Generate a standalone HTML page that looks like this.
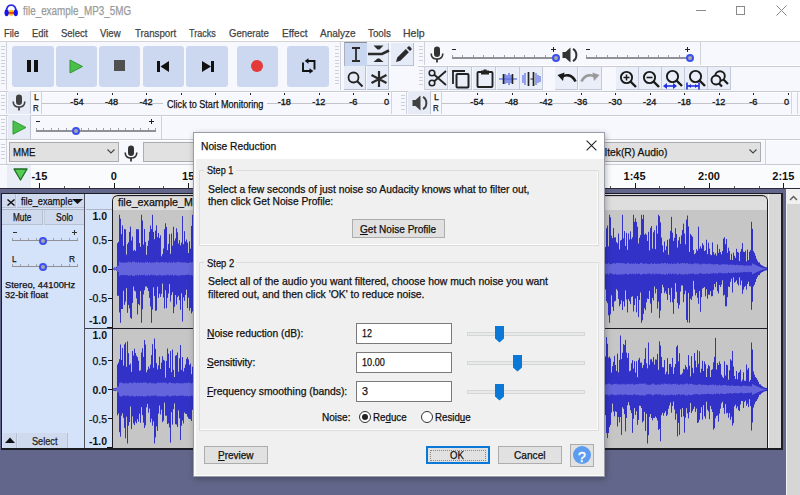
<!DOCTYPE html>
<html><head><meta charset="utf-8"><title>Audacity - Noise Reduction</title>
<style>
html,body{margin:0;padding:0;width:800px;height:495px;overflow:hidden;background:#fff}
body{position:relative;font-family:"Liberation Sans",sans-serif}
div{position:absolute}
.t{position:absolute;white-space:pre;display:block}
svg{overflow:visible}
u{text-decoration-thickness:1px;text-underline-offset:0.5px}
</style></head><body>
<div style="left:0px;top:0px;width:800px;height:41px;background:#fff"></div>
<svg style="position:absolute;left:4px;top:3.5px" width="15" height="13" viewBox="0 0 15 13">
<path d="M2.4 8 C2.4 3 4.5 1.2 7.2 1.2 C9.9 1.2 12 3 12 8" fill="none" stroke="#2a2ae6" stroke-width="1.7"/>
<ellipse cx="7.2" cy="8.8" rx="3.4" ry="3" fill="#f9c320"/>
<rect x="3.8" y="8" width="6.8" height="1.8" fill="#ee3a12"/>
<ellipse cx="2.6" cy="8.8" rx="2.1" ry="3.4" fill="#1414f0"/>
<ellipse cx="11.8" cy="8.8" rx="2.1" ry="3.4" fill="#1414f0"/>
</svg>
<span class="t" style="left:22.80px;top:4.84px;font-size:12px;line-height:12px;color:#9a9a9a;font-weight:normal;transform:scaleX(0.8234);transform-origin:left top;font-family:'Liberation Sans',sans-serif;-webkit-text-stroke:0.25px #9a9a9a">file_example_MP3_5MG</span>
<div style="left:696px;top:10px;width:10px;height:1px;background:#8a8a8a"></div>
<div style="left:736px;top:6px;width:9px;height:9px;border:1px solid #8a8a8a;box-sizing:border-box"></div>
<svg style="position:absolute;left:776px;top:5px" width="11" height="11" viewBox="0 0 11 11"><path d="M0.5 0.5 L10.5 10.5 M10.5 0.5 L0.5 10.5" stroke="#8a8a8a" stroke-width="1"/></svg>
<span class="t" style="left:3.90px;top:27.99px;font-size:11px;line-height:11px;color:#444;font-weight:normal;transform:scaleX(0.8515);transform-origin:left top;font-family:'Liberation Sans',sans-serif;-webkit-text-stroke:0.25px #444">File</span>
<span class="t" style="left:31.80px;top:27.99px;font-size:11px;line-height:11px;color:#444;font-weight:normal;transform:scaleX(0.8540);transform-origin:left top;font-family:'Liberation Sans',sans-serif;-webkit-text-stroke:0.25px #444">Edit</span>
<span class="t" style="left:61.00px;top:27.99px;font-size:11px;line-height:11px;color:#444;font-weight:normal;transform:scaleX(0.8634);transform-origin:left top;font-family:'Liberation Sans',sans-serif;-webkit-text-stroke:0.25px #444">Select</span>
<span class="t" style="left:100.30px;top:27.99px;font-size:11px;line-height:11px;color:#444;font-weight:normal;transform:scaleX(0.8708);transform-origin:left top;font-family:'Liberation Sans',sans-serif;-webkit-text-stroke:0.25px #444">View</span>
<span class="t" style="left:134.60px;top:27.99px;font-size:11px;line-height:11px;color:#444;font-weight:normal;transform:scaleX(0.8828);transform-origin:left top;font-family:'Liberation Sans',sans-serif;-webkit-text-stroke:0.25px #444">Transport</span>
<span class="t" style="left:189.00px;top:27.99px;font-size:11px;line-height:11px;color:#444;font-weight:normal;transform:scaleX(0.8192);transform-origin:left top;font-family:'Liberation Sans',sans-serif;-webkit-text-stroke:0.25px #444">Tracks</span>
<span class="t" style="left:229.20px;top:27.99px;font-size:11px;line-height:11px;color:#444;font-weight:normal;transform:scaleX(0.8676);transform-origin:left top;font-family:'Liberation Sans',sans-serif;-webkit-text-stroke:0.25px #444">Generate</span>
<span class="t" style="left:282.00px;top:27.99px;font-size:11px;line-height:11px;color:#444;font-weight:normal;transform:scaleX(0.9128);transform-origin:left top;font-family:'Liberation Sans',sans-serif;-webkit-text-stroke:0.25px #444">Effect</span>
<span class="t" style="left:319.90px;top:27.99px;font-size:11px;line-height:11px;color:#444;font-weight:normal;transform:scaleX(0.9121);transform-origin:left top;font-family:'Liberation Sans',sans-serif;-webkit-text-stroke:0.25px #444">Analyze</span>
<span class="t" style="left:368.00px;top:27.99px;font-size:11px;line-height:11px;color:#444;font-weight:normal;transform:scaleX(0.8876);transform-origin:left top;font-family:'Liberation Sans',sans-serif;-webkit-text-stroke:0.25px #444">Tools</span>
<span class="t" style="left:403.10px;top:27.99px;font-size:11px;line-height:11px;color:#444;font-weight:normal;transform:scaleX(0.9591);transform-origin:left top;font-family:'Liberation Sans',sans-serif;-webkit-text-stroke:0.25px #444">Help</span>
<div style="left:0px;top:41px;width:800px;height:148px;background:#f7f8fd"></div>
<div style="left:0px;top:41px;width:800px;height:1px;background:#d4d4d4"></div>
<div style="left:0px;top:91px;width:800px;height:1px;background:#c9cbd2"></div>
<div style="left:0px;top:92px;width:800px;height:1px;background:#ffffff"></div>
<div style="left:0px;top:115px;width:800px;height:1px;background:#c9cbd2"></div>
<div style="left:0px;top:116px;width:800px;height:1px;background:#ffffff"></div>
<div style="left:0px;top:139px;width:800px;height:1px;background:#c9cbd2"></div>
<div style="left:0px;top:140px;width:800px;height:1px;background:#ffffff"></div>
<div style="left:0px;top:164px;width:800px;height:1px;background:#c9cbd2"></div>
<div style="left:0px;top:165px;width:800px;height:1px;background:#ffffff"></div>
<div style="left:1px;top:46.0px;width:4px;height:1px;background:#cdd0d8"></div><div style="left:1px;top:49.4px;width:4px;height:1px;background:#cdd0d8"></div><div style="left:1px;top:52.8px;width:4px;height:1px;background:#cdd0d8"></div><div style="left:1px;top:56.2px;width:4px;height:1px;background:#cdd0d8"></div><div style="left:1px;top:59.6px;width:4px;height:1px;background:#cdd0d8"></div><div style="left:1px;top:63.0px;width:4px;height:1px;background:#cdd0d8"></div><div style="left:1px;top:66.4px;width:4px;height:1px;background:#cdd0d8"></div><div style="left:1px;top:69.8px;width:4px;height:1px;background:#cdd0d8"></div><div style="left:1px;top:73.2px;width:4px;height:1px;background:#cdd0d8"></div><div style="left:1px;top:76.6px;width:4px;height:1px;background:#cdd0d8"></div><div style="left:1px;top:80.0px;width:4px;height:1px;background:#cdd0d8"></div><div style="left:1px;top:83.4px;width:4px;height:1px;background:#cdd0d8"></div>
<div style="left:6px;top:42px;width:1px;height:48px;background:#cfd2da"></div>
<div style="left:12px;top:45.5px;width:42px;height:41px;background:#ccd8f0;border-radius:3px"></div>
<div style="left:56px;top:45.5px;width:41px;height:41px;background:#ccd8f0;border-radius:3px"></div>
<div style="left:99px;top:45.5px;width:41px;height:41px;background:#ccd8f0;border-radius:3px"></div>
<div style="left:143px;top:45.5px;width:41px;height:41px;background:#ccd8f0;border-radius:3px"></div>
<div style="left:186px;top:45.5px;width:42px;height:41px;background:#ccd8f0;border-radius:3px"></div>
<div style="left:237px;top:45.5px;width:41px;height:41px;background:#ccd8f0;border-radius:3px"></div>
<div style="left:287px;top:45.5px;width:42px;height:41px;background:#ccd8f0;border-radius:3px"></div>
<div style="left:27px;top:60px;width:4px;height:12px;background:#111"></div>
<div style="left:34px;top:60px;width:4px;height:12px;background:#111"></div>
<svg style="position:absolute;left:69px;top:59px" width="15" height="15" viewBox="0 0 15 15"><path d="M1 1 L13.5 7.5 L1 14 Z" fill="#4bbf4b" stroke="#2e9a33" stroke-width="1"/></svg>
<div style="left:114px;top:60px;width:11px;height:11px;background:#505050"></div>
<div style="left:157px;top:61px;width:3px;height:11px;background:#111"></div>
<svg style="position:absolute;left:160px;top:61px" width="10" height="11" viewBox="0 0 10 11"><path d="M0.5 5.5 L9 0 L9 11 Z" fill="#111"/></svg>
<div style="left:211px;top:61px;width:3px;height:11px;background:#111"></div>
<svg style="position:absolute;left:201px;top:61px" width="10" height="11" viewBox="0 0 10 11"><path d="M10 5.5 L1 0 L1 11 Z" fill="#111"/></svg>
<div style="left:251px;top:60px;width:12px;height:12px;border-radius:50%;background:#e53a3a"></div>
<svg style="position:absolute;left:301px;top:58px" width="16" height="16" viewBox="0 0 16 16">
<path d="M2 4.5 V13 H9" fill="none" stroke="#111" stroke-width="1.9"/><path d="M8.5 10.2 L12.3 13 L8.5 15.8 Z" fill="#111"/>
<path d="M13.5 11.5 V3 H7" fill="none" stroke="#111" stroke-width="1.9"/><path d="M7.5 0.2 L3.7 3 L7.5 5.8 Z" fill="#111"/>
</svg>
<div style="left:335px;top:46.0px;width:4px;height:1px;background:#cdd0d8"></div><div style="left:335px;top:49.4px;width:4px;height:1px;background:#cdd0d8"></div><div style="left:335px;top:52.8px;width:4px;height:1px;background:#cdd0d8"></div><div style="left:335px;top:56.2px;width:4px;height:1px;background:#cdd0d8"></div><div style="left:335px;top:59.6px;width:4px;height:1px;background:#cdd0d8"></div><div style="left:335px;top:63.0px;width:4px;height:1px;background:#cdd0d8"></div><div style="left:335px;top:66.4px;width:4px;height:1px;background:#cdd0d8"></div><div style="left:335px;top:69.8px;width:4px;height:1px;background:#cdd0d8"></div><div style="left:335px;top:73.2px;width:4px;height:1px;background:#cdd0d8"></div><div style="left:335px;top:76.6px;width:4px;height:1px;background:#cdd0d8"></div><div style="left:335px;top:80.0px;width:4px;height:1px;background:#cdd0d8"></div><div style="left:335px;top:83.4px;width:4px;height:1px;background:#cdd0d8"></div>
<div style="left:340px;top:42px;width:1px;height:48px;background:#cfd2da"></div>
<div style="left:344px;top:42px;width:23px;height:24px;background:#c8d6f0;border-top:1.5px solid #8a8f9c;border-left:1px solid #a9b0c0;box-sizing:border-box"></div>
<div style="left:367px;top:43px;width:22px;height:23px;background:#e6ecf7;border-right:1px solid #b9c0cf;border-bottom:1px solid #b9c0cf;box-sizing:border-box"></div>
<div style="left:391px;top:43px;width:23px;height:23px;background:#e6ecf7;border-right:1px solid #b9c0cf;border-bottom:1px solid #b9c0cf;box-sizing:border-box"></div>
<div style="left:344px;top:66px;width:22px;height:24px;background:#e6ecf7;border-right:1px solid #b9c0cf;border-bottom:1px solid #b9c0cf;box-sizing:border-box"></div>
<div style="left:367px;top:66px;width:22px;height:24px;background:#e6ecf7;border-right:1px solid #b9c0cf;border-bottom:1px solid #b9c0cf;box-sizing:border-box"></div>
<svg style="position:absolute;left:350px;top:47px" width="12" height="15" viewBox="0 0 12 15"><path d="M2 1 H10 M6 1 V14 M2 14 H10" stroke="#2a2a2a" stroke-width="1.8" fill="none"/></svg>
<svg style="position:absolute;left:366px;top:44px" width="24" height="20" viewBox="0 0 24 20">
<path d="M7.5 1.5 H17.5 L13.5 5.5 H11.5 Z" fill="#2a2a2a"/><path d="M7.5 18 H17.5 L13.5 14.5 H11.5 Z" fill="#2a2a2a"/>
<path d="M2 10 H16 L23 6.5" stroke="#2a2a2a" stroke-width="2.6" fill="none"/></svg>
<svg style="position:absolute;left:394px;top:46px" width="18" height="18" viewBox="0 0 18 18">
<path d="M2 16 L3.3 11.6 L11.8 3.1 L14.9 6.2 L6.4 14.7 Z" fill="#2a2a2a"/><path d="M12.9 2 L14.3 0.6 Q15 -0.1 15.8 0.6 L17.4 2.2 Q18.1 3 17.4 3.7 L16 5.1 Z" fill="#2a2a2a"/></svg>
<svg style="position:absolute;left:347px;top:71px" width="17" height="17" viewBox="0 0 17 17">
<circle cx="6.5" cy="6.5" r="5" stroke="#222" stroke-width="1.8" fill="none"/><path d="M10 10 L15.5 15.5" stroke="#222" stroke-width="2"/></svg>
<svg style="position:absolute;left:370px;top:70px" width="18" height="18" viewBox="0 0 18 18">
<path d="M9 1 V17 M1.5 5 L16.5 13 M1.5 13 L16.5 5" stroke="#2a2a2a" stroke-width="2.2"/></svg>
<div style="left:419px;top:46.0px;width:4px;height:1px;background:#cdd0d8"></div><div style="left:419px;top:49.4px;width:4px;height:1px;background:#cdd0d8"></div><div style="left:419px;top:52.8px;width:4px;height:1px;background:#cdd0d8"></div><div style="left:419px;top:56.2px;width:4px;height:1px;background:#cdd0d8"></div><div style="left:419px;top:59.6px;width:4px;height:1px;background:#cdd0d8"></div>
<div style="left:424px;top:42px;width:1px;height:24px;background:#cfd2da"></div>
<svg style="position:absolute;left:430px;top:46px" width="14" height="17" viewBox="0 0 14 17">
<rect x="4" y="0.5" width="6" height="10.5" rx="3" fill="#333"/><path d="M1.2 7.5 C1.2 11 3.5 13 7 13 C10.5 13 12.8 11 12.8 7.5" stroke="#333" stroke-width="1.6" fill="none"/>
<path d="M7 13 V16.5" stroke="#333" stroke-width="1.8"/></svg>
<div style="left:452px;top:57px;width:104px;height:1.5px;background:#8f9098"></div><div style="left:452.0px;top:55px;width:1px;height:2px;background:#a0a0a8"></div><div style="left:462.3px;top:55px;width:1px;height:2px;background:#a0a0a8"></div><div style="left:472.6px;top:55px;width:1px;height:2px;background:#a0a0a8"></div><div style="left:482.9px;top:55px;width:1px;height:2px;background:#a0a0a8"></div><div style="left:493.2px;top:55px;width:1px;height:2px;background:#a0a0a8"></div><div style="left:503.5px;top:55px;width:1px;height:2px;background:#a0a0a8"></div><div style="left:513.8px;top:55px;width:1px;height:2px;background:#a0a0a8"></div><div style="left:524.1px;top:55px;width:1px;height:2px;background:#a0a0a8"></div><div style="left:534.4px;top:55px;width:1px;height:2px;background:#a0a0a8"></div><div style="left:544.7px;top:55px;width:1px;height:2px;background:#a0a0a8"></div><div style="left:555.0px;top:55px;width:1px;height:2px;background:#a0a0a8"></div><div style="left:551.5px;top:54.0px;width:8px;height:8px;border-radius:50%;background:#a8a8a8;border:2.2px solid #3b4ff2;box-sizing:border-box"></div>
<div style="left:452px;top:48.5px;width:4px;height:1.2px;background:#222"></div>
<div style="left:551px;top:48.5px;width:5px;height:1.2px;background:#222"></div>
<div style="left:552.9px;top:46.5px;width:1.2px;height:5px;background:#222"></div>
<svg style="position:absolute;left:562px;top:47px" width="16" height="16" viewBox="0 0 16 16">
<path d="M0.5 5 H3.5 L8.5 0.5 V15.5 L3.5 11 H0.5 Z" fill="#333"/><path d="M11 1.8 C15.5 4.5 15.5 11.5 11 14.2" stroke="#333" stroke-width="2" fill="none"/></svg>
<div style="left:586px;top:57px;width:104px;height:1.5px;background:#8f9098"></div><div style="left:586.0px;top:55px;width:1px;height:2px;background:#a0a0a8"></div><div style="left:596.3px;top:55px;width:1px;height:2px;background:#a0a0a8"></div><div style="left:606.6px;top:55px;width:1px;height:2px;background:#a0a0a8"></div><div style="left:616.9px;top:55px;width:1px;height:2px;background:#a0a0a8"></div><div style="left:627.2px;top:55px;width:1px;height:2px;background:#a0a0a8"></div><div style="left:637.5px;top:55px;width:1px;height:2px;background:#a0a0a8"></div><div style="left:647.8px;top:55px;width:1px;height:2px;background:#a0a0a8"></div><div style="left:658.1px;top:55px;width:1px;height:2px;background:#a0a0a8"></div><div style="left:668.4px;top:55px;width:1px;height:2px;background:#a0a0a8"></div><div style="left:678.7px;top:55px;width:1px;height:2px;background:#a0a0a8"></div><div style="left:689.0px;top:55px;width:1px;height:2px;background:#a0a0a8"></div><div style="left:686.0px;top:54.0px;width:8px;height:8px;border-radius:50%;background:#a8a8a8;border:2.2px solid #3b4ff2;box-sizing:border-box"></div>
<div style="left:586px;top:48.5px;width:4px;height:1.2px;background:#222"></div>
<div style="left:685px;top:48.5px;width:5px;height:1.2px;background:#222"></div>
<div style="left:686.9px;top:46.5px;width:1.2px;height:5px;background:#222"></div>
<div style="left:700px;top:42px;width:1px;height:24px;background:#cfd2da"></div>
<div style="left:418px;top:66px;width:382px;height:1px;background:#c9cbd2"></div>
<div style="left:418px;top:65px;width:382px;height:1px;background:#ffffff"></div>
<div style="left:419px;top:70.0px;width:4px;height:1px;background:#cdd0d8"></div><div style="left:419px;top:73.4px;width:4px;height:1px;background:#cdd0d8"></div><div style="left:419px;top:76.8px;width:4px;height:1px;background:#cdd0d8"></div><div style="left:419px;top:80.2px;width:4px;height:1px;background:#cdd0d8"></div><div style="left:419px;top:83.6px;width:4px;height:1px;background:#cdd0d8"></div>
<div style="left:424px;top:66px;width:1px;height:24px;background:#cfd2da"></div>
<div style="left:425px;top:67px;width:23px;height:23px;background:#e9eef8;border-right:1px solid #c3c9d6;border-bottom:1px solid #c3c9d6;box-sizing:border-box"></div>
<div style="left:449px;top:67px;width:23px;height:23px;background:#e9eef8;border-right:1px solid #c3c9d6;border-bottom:1px solid #c3c9d6;box-sizing:border-box"></div>
<div style="left:473px;top:67px;width:23px;height:23px;background:#e9eef8;border-right:1px solid #c3c9d6;border-bottom:1px solid #c3c9d6;box-sizing:border-box"></div>
<div style="left:497px;top:67px;width:23px;height:23px;background:#e9eef8;border-right:1px solid #c3c9d6;border-bottom:1px solid #c3c9d6;box-sizing:border-box"></div>
<div style="left:520px;top:67px;width:23px;height:23px;background:#e9eef8;border-right:1px solid #c3c9d6;border-bottom:1px solid #c3c9d6;box-sizing:border-box"></div>
<div style="left:555px;top:67px;width:23px;height:23px;background:#e9eef8;border-right:1px solid #c3c9d6;border-bottom:1px solid #c3c9d6;box-sizing:border-box"></div>
<div style="left:579px;top:67px;width:23px;height:23px;background:#e9eef8;border-right:1px solid #c3c9d6;border-bottom:1px solid #c3c9d6;box-sizing:border-box"></div>
<div style="left:616px;top:67px;width:23px;height:23px;background:#e9eef8;border-right:1px solid #c3c9d6;border-bottom:1px solid #c3c9d6;box-sizing:border-box"></div>
<div style="left:639px;top:67px;width:23px;height:23px;background:#e9eef8;border-right:1px solid #c3c9d6;border-bottom:1px solid #c3c9d6;box-sizing:border-box"></div>
<div style="left:662px;top:67px;width:23px;height:23px;background:#e9eef8;border-right:1px solid #c3c9d6;border-bottom:1px solid #c3c9d6;box-sizing:border-box"></div>
<div style="left:685px;top:67px;width:23px;height:23px;background:#e9eef8;border-right:1px solid #c3c9d6;border-bottom:1px solid #c3c9d6;box-sizing:border-box"></div>
<div style="left:708px;top:67px;width:23px;height:23px;background:#e9eef8;border-right:1px solid #c3c9d6;border-bottom:1px solid #c3c9d6;box-sizing:border-box"></div>
<svg style="position:absolute;left:428px;top:69px" width="19" height="18" viewBox="0 0 19 18">
<circle cx="4" cy="4" r="2.8" stroke="#222" stroke-width="1.6" fill="none"/><circle cx="4" cy="14" r="2.8" stroke="#222" stroke-width="1.6" fill="none"/>
<path d="M6 5.5 L18 16 M6 12.5 L18 2" stroke="#222" stroke-width="1.8"/></svg>
<svg style="position:absolute;left:451px;top:69px" width="20" height="20" viewBox="0 0 20 20">
<path d="M2 15 V2 H14" stroke="#222" stroke-width="1.8" fill="none"/><rect x="5.5" y="5" width="12" height="13.5" rx="1" stroke="#222" stroke-width="2" fill="none"/></svg>
<svg style="position:absolute;left:476px;top:69px" width="18" height="19" viewBox="0 0 18 19">
<rect x="1.5" y="3" width="15" height="15" rx="1" stroke="#222" stroke-width="1.9" fill="none"/><path d="M5 1.5 H13 V5.5 H5 Z" fill="#222"/><rect x="7.5" y="0.5" width="3" height="2" fill="#222"/></svg>
<svg style="position:absolute;left:498px;top:71px" width="20" height="16" viewBox="0 0 20 16">
<path d="M1 8 H19" stroke="#3a4ed8" stroke-width="1"/>
<path d="M7 3 V13 M9 4 V12 M11 2 V14 M13 4 V12" stroke="#5a6ee0" stroke-width="1.4"/>
<path d="M5.5 3 V13 M14.5 3 V13" stroke="#222" stroke-width="1.6"/></svg>
<svg style="position:absolute;left:521px;top:70px" width="21" height="18" viewBox="0 0 21 18">
<path d="M2 5 V13 M4 3 V15 M15 3 V15 M17 5 V13 M19 6 V12" stroke="#6f80e8" stroke-width="1.4"/>
<path d="M9.5 9 H12" stroke="#222" stroke-width="1"/>
<path d="M7.5 2 V16 M12.5 2 V16" stroke="#222" stroke-width="1.7"/></svg>
<svg style="position:absolute;left:557px;top:71px" width="20" height="14" viewBox="0 0 20 14">
<path d="M4 6.5 C8 3 15 3 18.5 10.5" stroke="#1a1a1a" stroke-width="2.6" fill="none"/><path d="M0.5 4 L7.5 1.5 L6 10 Z" fill="#1a1a1a"/></svg>
<svg style="position:absolute;left:580px;top:71px" width="20" height="14" viewBox="0 0 20 14">
<path d="M16 6.5 C12 3 5 3 1.5 10.5" stroke="#9a9a9a" stroke-width="2.6" fill="none"/><path d="M19.5 4 L12.5 1.5 L14 10 Z" fill="#9a9a9a"/></svg>
<svg style="position:absolute;left:619px;top:70px" width="19" height="19" viewBox="0 0 19 19">
<circle cx="7.5" cy="7.5" r="5.6" stroke="#1a1a1a" stroke-width="1.9" fill="none"/><path d="M11.5 11.5 L17 17" stroke="#1a1a1a" stroke-width="2.4"/><path d="M4.5 7.5 H10.5 M7.5 4.5 V10.5" stroke="#1a1a1a" stroke-width="1.5"/></svg>
<svg style="position:absolute;left:642px;top:70px" width="19" height="19" viewBox="0 0 19 19">
<circle cx="7.5" cy="7.5" r="5.6" stroke="#1a1a1a" stroke-width="1.9" fill="none"/><path d="M11.5 11.5 L17 17" stroke="#1a1a1a" stroke-width="2.4"/><path d="M4.5 7.5 H10.5" stroke="#1a1a1a" stroke-width="1.6"/></svg>
<svg style="position:absolute;left:665px;top:69px" width="19" height="19" viewBox="0 0 19 19">
<circle cx="7.5" cy="7.5" r="5.6" stroke="#1a1a1a" stroke-width="1.9" fill="none"/><path d="M11.5 11.5 L17 17" stroke="#1a1a1a" stroke-width="2.4"/></svg>
<svg style="position:absolute;left:663px;top:82px" width="14" height="8" viewBox="0 0 14 8"><path d="M2 4 H12" stroke="#2030e0" stroke-width="1.6"/><path d="M0 4 L4 1 V7 Z M14 4 L10 1 V7 Z" fill="#2030e0"/></svg>
<svg style="position:absolute;left:688px;top:69px" width="19" height="19" viewBox="0 0 19 19">
<circle cx="7.5" cy="7.5" r="5.6" stroke="#1a1a1a" stroke-width="1.9" fill="none"/><path d="M11.5 11.5 L17 17" stroke="#1a1a1a" stroke-width="2.4"/></svg>
<svg style="position:absolute;left:686px;top:82px" width="14" height="8" viewBox="0 0 14 8"><path d="M1 4 H13" stroke="#2030e0" stroke-width="1.6"/><path d="M1 0.5 V7.5 M13 0.5 V7.5" stroke="#2030e0" stroke-width="1.6"/><path d="M2 4 L5 2 V6 Z M12 4 L9 2 V6 Z" fill="#2030e0"/></svg>
<svg style="position:absolute;left:710px;top:69px" width="20" height="20" viewBox="0 0 20 20">
<circle cx="10" cy="7" r="4.8" stroke="#1a1a1a" stroke-width="1.9" fill="none"/><circle cx="6" cy="11" r="4.5" stroke="#1a1a1a" stroke-width="1.9" fill="#e9eef8"/>
<path d="M13.5 10.5 L18 15 M9 14.5 L12 17.5" stroke="#1a1a1a" stroke-width="2.2"/></svg>
<div style="left:1px;top:95.0px;width:4px;height:1px;background:#cdd0d8"></div><div style="left:1px;top:98.4px;width:4px;height:1px;background:#cdd0d8"></div><div style="left:1px;top:101.8px;width:4px;height:1px;background:#cdd0d8"></div><div style="left:1px;top:105.2px;width:4px;height:1px;background:#cdd0d8"></div><div style="left:1px;top:108.6px;width:4px;height:1px;background:#cdd0d8"></div>
<div style="left:6px;top:91px;width:1px;height:23px;background:#cfd2da"></div>
<div style="left:8px;top:91px;width:23px;height:23px;background:#e6ebf6;border-right:1px solid #c0c6d3;box-sizing:border-box"></div>
<svg style="position:absolute;left:12px;top:94px" width="14" height="17" viewBox="0 0 14 17">
<rect x="4" y="0.5" width="6" height="10.5" rx="3" fill="#404040"/><path d="M1.2 7.5 C1.2 11 3.5 13 7 13 C10.5 13 12.8 11 12.8 7.5" stroke="#404040" stroke-width="1.6" fill="none"/>
<path d="M7 13 V16.5" stroke="#404040" stroke-width="1.8"/></svg>
<span class="t" style="left:33.60px;top:92.17px;font-size:9.6px;line-height:9.6px;color:#111;font-weight:normal;transform:scaleX(0.9170);transform-origin:left top;font-family:'Liberation Sans',sans-serif;-webkit-text-stroke:0.25px #111">L</span>
<span class="t" style="left:33.30px;top:104.01px;font-size:9.2px;line-height:9.2px;color:#111;font-weight:normal;transform:scaleX(0.8584);transform-origin:left top;font-family:'Liberation Sans',sans-serif;-webkit-text-stroke:0.25px #111">R</span>
<div style="left:41px;top:91px;width:1px;height:23px;background:#cfd2da"></div>
<div style="left:42px;top:103px;width:348px;height:1px;background:#c2c4ca"></div>
<div style="left:390.5px;top:91px;width:1px;height:23px;background:#d4d6dc"></div>
<div style="left:77px;top:93px;width:1px;height:2px;background:#222"></div>
<span class="t" style="left:70.36px;top:98.01px;font-size:9.2px;line-height:9.2px;color:#111;font-weight:normal;transform:scaleX(1.0000);transform-origin:center top;font-family:'Liberation Sans',sans-serif;-webkit-text-stroke:0.3px #111">-54</span>
<div style="left:112px;top:93px;width:1px;height:2px;background:#222"></div>
<span class="t" style="left:104.91px;top:98.01px;font-size:9.2px;line-height:9.2px;color:#111;font-weight:normal;transform:scaleX(1.0000);transform-origin:center top;font-family:'Liberation Sans',sans-serif;-webkit-text-stroke:0.3px #111">-48</span>
<div style="left:146px;top:93px;width:1px;height:2px;background:#222"></div>
<span class="t" style="left:139.46px;top:98.01px;font-size:9.2px;line-height:9.2px;color:#111;font-weight:normal;transform:scaleX(1.0000);transform-origin:center top;font-family:'Liberation Sans',sans-serif;-webkit-text-stroke:0.3px #111">-42</span>
<div style="left:181px;top:93px;width:1px;height:2px;background:#222"></div>
<div style="left:215px;top:93px;width:1px;height:2px;background:#222"></div>
<div style="left:250px;top:93px;width:1px;height:2px;background:#222"></div>
<div style="left:284px;top:93px;width:1px;height:2px;background:#222"></div>
<span class="t" style="left:277.66px;top:98.01px;font-size:9.2px;line-height:9.2px;color:#111;font-weight:normal;transform:scaleX(1.0000);transform-origin:center top;font-family:'Liberation Sans',sans-serif;-webkit-text-stroke:0.3px #111">-18</span>
<div style="left:319px;top:93px;width:1px;height:2px;background:#222"></div>
<span class="t" style="left:312.21px;top:98.01px;font-size:9.2px;line-height:9.2px;color:#111;font-weight:normal;transform:scaleX(1.0000);transform-origin:center top;font-family:'Liberation Sans',sans-serif;-webkit-text-stroke:0.3px #111">-12</span>
<div style="left:353px;top:93px;width:1px;height:2px;background:#222"></div>
<span class="t" style="left:349.31px;top:98.01px;font-size:9.2px;line-height:9.2px;color:#111;font-weight:normal;transform:scaleX(1.0000);transform-origin:center top;font-family:'Liberation Sans',sans-serif;-webkit-text-stroke:0.3px #111">-6</span>
<div style="left:388px;top:93px;width:1px;height:2px;background:#222"></div>
<span class="t" style="left:383.89px;top:98.01px;font-size:9.2px;line-height:9.2px;color:#111;font-weight:normal;transform:scaleX(1.0000);transform-origin:center top;font-family:'Liberation Sans',sans-serif;-webkit-text-stroke:0.3px #111">0</span>
<div style="left:163px;top:97px;width:104px;height:13px;background:#f7f8fd"></div>
<span class="t" style="left:166.60px;top:99.53px;font-size:10px;line-height:10px;color:#111;font-weight:normal;transform:scaleX(0.9081);transform-origin:left top;font-family:'Liberation Sans',sans-serif;-webkit-text-stroke:0.25px #111">Click to Start Monitoring</span>
<div style="left:401px;top:95.0px;width:4px;height:1px;background:#cdd0d8"></div><div style="left:401px;top:98.4px;width:4px;height:1px;background:#cdd0d8"></div><div style="left:401px;top:101.8px;width:4px;height:1px;background:#cdd0d8"></div><div style="left:401px;top:105.2px;width:4px;height:1px;background:#cdd0d8"></div><div style="left:401px;top:108.6px;width:4px;height:1px;background:#cdd0d8"></div>
<div style="left:406px;top:91px;width:1px;height:23px;background:#cfd2da"></div>
<div style="left:408px;top:91px;width:23px;height:23px;background:#e6ebf6;border-right:1px solid #c0c6d3;box-sizing:border-box"></div>
<svg style="position:absolute;left:412px;top:95px" width="16" height="16" viewBox="0 0 16 16">
<path d="M0.5 5 H3.5 L8.5 0.5 V15.5 L3.5 11 H0.5 Z" fill="#404040"/><path d="M11 1.8 C15.5 4.5 15.5 11.5 11 14.2" stroke="#404040" stroke-width="2" fill="none"/></svg>
<span class="t" style="left:433.60px;top:92.17px;font-size:9.6px;line-height:9.6px;color:#111;font-weight:normal;transform:scaleX(0.9170);transform-origin:left top;font-family:'Liberation Sans',sans-serif;-webkit-text-stroke:0.25px #111">L</span>
<span class="t" style="left:433.30px;top:104.01px;font-size:9.2px;line-height:9.2px;color:#111;font-weight:normal;transform:scaleX(0.8584);transform-origin:left top;font-family:'Liberation Sans',sans-serif;-webkit-text-stroke:0.25px #111">R</span>
<div style="left:441px;top:91px;width:1px;height:23px;background:#cfd2da"></div>
<div style="left:442px;top:103px;width:348px;height:1px;background:#c2c4ca"></div>
<div style="left:790.5px;top:91px;width:1px;height:23px;background:#d4d6dc"></div>
<div style="left:477px;top:93px;width:1px;height:2px;background:#222"></div>
<span class="t" style="left:470.36px;top:98.01px;font-size:9.2px;line-height:9.2px;color:#111;font-weight:normal;transform:scaleX(1.0000);transform-origin:center top;font-family:'Liberation Sans',sans-serif;-webkit-text-stroke:0.3px #111">-54</span>
<div style="left:512px;top:93px;width:1px;height:2px;background:#222"></div>
<span class="t" style="left:504.91px;top:98.01px;font-size:9.2px;line-height:9.2px;color:#111;font-weight:normal;transform:scaleX(1.0000);transform-origin:center top;font-family:'Liberation Sans',sans-serif;-webkit-text-stroke:0.3px #111">-48</span>
<div style="left:546px;top:93px;width:1px;height:2px;background:#222"></div>
<span class="t" style="left:539.46px;top:98.01px;font-size:9.2px;line-height:9.2px;color:#111;font-weight:normal;transform:scaleX(1.0000);transform-origin:center top;font-family:'Liberation Sans',sans-serif;-webkit-text-stroke:0.3px #111">-42</span>
<div style="left:581px;top:93px;width:1px;height:2px;background:#222"></div>
<span class="t" style="left:574.01px;top:98.01px;font-size:9.2px;line-height:9.2px;color:#111;font-weight:normal;transform:scaleX(1.0000);transform-origin:center top;font-family:'Liberation Sans',sans-serif;-webkit-text-stroke:0.3px #111">-36</span>
<div style="left:615px;top:93px;width:1px;height:2px;background:#222"></div>
<span class="t" style="left:608.56px;top:98.01px;font-size:9.2px;line-height:9.2px;color:#111;font-weight:normal;transform:scaleX(1.0000);transform-origin:center top;font-family:'Liberation Sans',sans-serif;-webkit-text-stroke:0.3px #111">-30</span>
<div style="left:650px;top:93px;width:1px;height:2px;background:#222"></div>
<span class="t" style="left:643.11px;top:98.01px;font-size:9.2px;line-height:9.2px;color:#111;font-weight:normal;transform:scaleX(1.0000);transform-origin:center top;font-family:'Liberation Sans',sans-serif;-webkit-text-stroke:0.3px #111">-24</span>
<div style="left:684px;top:93px;width:1px;height:2px;background:#222"></div>
<span class="t" style="left:677.66px;top:98.01px;font-size:9.2px;line-height:9.2px;color:#111;font-weight:normal;transform:scaleX(1.0000);transform-origin:center top;font-family:'Liberation Sans',sans-serif;-webkit-text-stroke:0.3px #111">-18</span>
<div style="left:719px;top:93px;width:1px;height:2px;background:#222"></div>
<span class="t" style="left:712.21px;top:98.01px;font-size:9.2px;line-height:9.2px;color:#111;font-weight:normal;transform:scaleX(1.0000);transform-origin:center top;font-family:'Liberation Sans',sans-serif;-webkit-text-stroke:0.3px #111">-12</span>
<div style="left:753px;top:93px;width:1px;height:2px;background:#222"></div>
<span class="t" style="left:749.31px;top:98.01px;font-size:9.2px;line-height:9.2px;color:#111;font-weight:normal;transform:scaleX(1.0000);transform-origin:center top;font-family:'Liberation Sans',sans-serif;-webkit-text-stroke:0.3px #111">-6</span>
<div style="left:788px;top:93px;width:1px;height:2px;background:#222"></div>
<span class="t" style="left:783.89px;top:98.01px;font-size:9.2px;line-height:9.2px;color:#111;font-weight:normal;transform:scaleX(1.0000);transform-origin:center top;font-family:'Liberation Sans',sans-serif;-webkit-text-stroke:0.3px #111">0</span>
<div style="left:791px;top:91px;width:1px;height:23px;background:#d4d6dc"></div>
<div style="left:797px;top:91px;width:1px;height:23px;background:#d4d6dc"></div>
<div style="left:1px;top:119.0px;width:4px;height:1px;background:#cdd0d8"></div><div style="left:1px;top:122.4px;width:4px;height:1px;background:#cdd0d8"></div><div style="left:1px;top:125.8px;width:4px;height:1px;background:#cdd0d8"></div><div style="left:1px;top:129.2px;width:4px;height:1px;background:#cdd0d8"></div><div style="left:1px;top:132.6px;width:4px;height:1px;background:#cdd0d8"></div>
<div style="left:6px;top:115px;width:1px;height:24px;background:#cfd2da"></div>
<div style="left:8px;top:115px;width:23px;height:24px;background:#e6ebf6;border-right:1px solid #c0c6d3;box-sizing:border-box"></div>
<svg style="position:absolute;left:12px;top:120px" width="15" height="15" viewBox="0 0 15 15"><path d="M1 0.8 L14 7.5 L1 14.2 Z" fill="#4bbf4b" stroke="#2e9a33" stroke-width="1"/></svg>
<div style="left:36px;top:130px;width:120px;height:1.5px;background:#8f9098"></div><div style="left:36.0px;top:128px;width:1px;height:2px;background:#a0a0a8"></div><div style="left:43.4px;top:128px;width:1px;height:2px;background:#a0a0a8"></div><div style="left:50.9px;top:128px;width:1px;height:2px;background:#a0a0a8"></div><div style="left:58.3px;top:128px;width:1px;height:2px;background:#a0a0a8"></div><div style="left:65.8px;top:128px;width:1px;height:2px;background:#a0a0a8"></div><div style="left:73.2px;top:128px;width:1px;height:2px;background:#a0a0a8"></div><div style="left:80.6px;top:128px;width:1px;height:2px;background:#a0a0a8"></div><div style="left:88.1px;top:128px;width:1px;height:2px;background:#a0a0a8"></div><div style="left:95.5px;top:128px;width:1px;height:2px;background:#a0a0a8"></div><div style="left:102.9px;top:128px;width:1px;height:2px;background:#a0a0a8"></div><div style="left:110.4px;top:128px;width:1px;height:2px;background:#a0a0a8"></div><div style="left:117.8px;top:128px;width:1px;height:2px;background:#a0a0a8"></div><div style="left:125.2px;top:128px;width:1px;height:2px;background:#a0a0a8"></div><div style="left:132.7px;top:128px;width:1px;height:2px;background:#a0a0a8"></div><div style="left:140.1px;top:128px;width:1px;height:2px;background:#a0a0a8"></div><div style="left:147.6px;top:128px;width:1px;height:2px;background:#a0a0a8"></div><div style="left:155.0px;top:128px;width:1px;height:2px;background:#a0a0a8"></div><div style="left:71.6px;top:127.0px;width:8px;height:8px;border-radius:50%;background:#a8a8a8;border:2.2px solid #3b4ff2;box-sizing:border-box"></div>
<div style="left:36px;top:121px;width:4px;height:1.2px;background:#222"></div>
<div style="left:149px;top:121px;width:5px;height:1.2px;background:#222"></div>
<div style="left:150.9px;top:119px;width:1.2px;height:5px;background:#222"></div>
<div style="left:161px;top:115px;width:1px;height:24px;background:#cfd2da"></div>
<div style="left:1px;top:144.0px;width:4px;height:1px;background:#cdd0d8"></div><div style="left:1px;top:147.4px;width:4px;height:1px;background:#cdd0d8"></div><div style="left:1px;top:150.8px;width:4px;height:1px;background:#cdd0d8"></div><div style="left:1px;top:154.2px;width:4px;height:1px;background:#cdd0d8"></div><div style="left:1px;top:157.6px;width:4px;height:1px;background:#cdd0d8"></div>
<div style="left:6px;top:140px;width:1px;height:24px;background:#cfd2da"></div>
<div style="left:9px;top:142px;width:110px;height:20px;background:#e1e1e1;border:1px solid #adadad;box-sizing:border-box"></div>
<svg style="position:absolute;left:107px;top:149px" width="8" height="5" viewBox="0 0 8 5"><path d="M0.5 0.5 L4 4 L7.5 0.5" stroke="#444" stroke-width="1.1" fill="none"/></svg>
<span class="t" style="left:12.50px;top:147.19px;font-size:11px;line-height:11px;color:#111;font-weight:normal;transform:scaleX(0.8764);transform-origin:left top;font-family:'Liberation Sans',sans-serif;-webkit-text-stroke:0.25px #111">MME</span>
<svg style="position:absolute;left:124px;top:145px" width="14" height="17" viewBox="0 0 14 17">
<rect x="4" y="0.5" width="6" height="10.5" rx="3" fill="#333"/><path d="M1.2 7.5 C1.2 11 3.5 13 7 13 C10.5 13 12.8 11 12.8 7.5" stroke="#333" stroke-width="1.6" fill="none"/>
<path d="M7 13 V16.5" stroke="#333" stroke-width="1.8"/></svg>
<div style="left:143px;top:142px;width:120px;height:20px;background:#e1e1e1;border:1px solid #adadad;box-sizing:border-box"></div>
<svg style="position:absolute;left:251px;top:149px" width="8" height="5" viewBox="0 0 8 5"><path d="M0.5 0.5 L4 4 L7.5 0.5" stroke="#444" stroke-width="1.1" fill="none"/></svg>
<div style="left:560px;top:142px;width:201px;height:20px;background:#e1e1e1;border:1px solid #adadad;box-sizing:border-box"></div>
<svg style="position:absolute;left:749px;top:149px" width="8" height="5" viewBox="0 0 8 5"><path d="M0.5 0.5 L4 4 L7.5 0.5" stroke="#444" stroke-width="1.1" fill="none"/></svg>
<span class="t" style="left:536.20px;top:146.69px;font-size:11px;line-height:11px;color:#111;font-weight:normal;transform:scaleX(0.9385);transform-origin:left top;font-family:'Liberation Sans',sans-serif;-webkit-text-stroke:0.25px #111">Speakers (Realtek(R) Audio)</span>
<div style="left:765px;top:140px;width:1px;height:24px;background:#cfd2da"></div>
<div style="left:7px;top:165px;width:24px;height:23px;background:#e9edf6"></div>
<svg style="position:absolute;left:13px;top:168px" width="15" height="13" viewBox="0 0 15 13"><path d="M1 1 H14 L7.5 12 Z" fill="#55cc55" stroke="#1e6b22" stroke-width="1.3" stroke-linejoin="round"/></svg>
<div style="left:31px;top:165px;width:769px;height:23px;background:#fafbfd"></div>
<div style="left:39px;top:183px;width:1px;height:5px;background:#1a1a1a"></div>
<span class="t" style="left:31.40px;top:170.69px;font-size:11px;line-height:11px;color:#111;font-weight:bold;transform:scaleX(1.0000);transform-origin:center top;font-family:'Liberation Sans',sans-serif;-webkit-text-stroke:0px #111">-15</span>
<div style="left:64px;top:186px;width:1px;height:2px;background:#555"></div>
<div style="left:89px;top:186px;width:1px;height:2px;background:#555"></div>
<div style="left:114px;top:183px;width:1px;height:5px;background:#1a1a1a"></div>
<span class="t" style="left:110.69px;top:170.69px;font-size:11px;line-height:11px;color:#111;font-weight:bold;transform:scaleX(1.0000);transform-origin:center top;font-family:'Liberation Sans',sans-serif;-webkit-text-stroke:0px #111">0</span>
<div style="left:139px;top:186px;width:1px;height:2px;background:#555"></div>
<div style="left:163px;top:186px;width:1px;height:2px;background:#555"></div>
<div style="left:188px;top:183px;width:1px;height:5px;background:#1a1a1a"></div>
<span class="t" style="left:182.03px;top:170.69px;font-size:11px;line-height:11px;color:#111;font-weight:bold;transform:scaleX(1.0000);transform-origin:center top;font-family:'Liberation Sans',sans-serif;-webkit-text-stroke:0px #111">15</span>
<div style="left:213px;top:186px;width:1px;height:2px;background:#555"></div>
<div style="left:238px;top:186px;width:1px;height:2px;background:#555"></div>
<div style="left:263px;top:183px;width:1px;height:5px;background:#1a1a1a"></div>
<span class="t" style="left:256.43px;top:170.69px;font-size:11px;line-height:11px;color:#111;font-weight:bold;transform:scaleX(1.0000);transform-origin:center top;font-family:'Liberation Sans',sans-serif;-webkit-text-stroke:0px #111">30</span>
<div style="left:287px;top:186px;width:1px;height:2px;background:#555"></div>
<div style="left:312px;top:186px;width:1px;height:2px;background:#555"></div>
<div style="left:337px;top:183px;width:1px;height:5px;background:#1a1a1a"></div>
<span class="t" style="left:330.82px;top:170.69px;font-size:11px;line-height:11px;color:#111;font-weight:bold;transform:scaleX(1.0000);transform-origin:center top;font-family:'Liberation Sans',sans-serif;-webkit-text-stroke:0px #111">45</span>
<div style="left:362px;top:186px;width:1px;height:2px;background:#555"></div>
<div style="left:387px;top:186px;width:1px;height:2px;background:#555"></div>
<div style="left:411px;top:183px;width:1px;height:5px;background:#1a1a1a"></div>
<span class="t" style="left:400.33px;top:170.69px;font-size:11px;line-height:11px;color:#111;font-weight:bold;transform:scaleX(1.0000);transform-origin:center top;font-family:'Liberation Sans',sans-serif;-webkit-text-stroke:0px #111">1:00</span>
<div style="left:436px;top:186px;width:1px;height:2px;background:#555"></div>
<div style="left:461px;top:186px;width:1px;height:2px;background:#555"></div>
<div style="left:486px;top:183px;width:1px;height:5px;background:#1a1a1a"></div>
<span class="t" style="left:474.73px;top:170.69px;font-size:11px;line-height:11px;color:#111;font-weight:bold;transform:scaleX(1.0000);transform-origin:center top;font-family:'Liberation Sans',sans-serif;-webkit-text-stroke:0px #111">1:15</span>
<div style="left:511px;top:186px;width:1px;height:2px;background:#555"></div>
<div style="left:535px;top:186px;width:1px;height:2px;background:#555"></div>
<div style="left:560px;top:183px;width:1px;height:5px;background:#1a1a1a"></div>
<span class="t" style="left:549.13px;top:170.69px;font-size:11px;line-height:11px;color:#111;font-weight:bold;transform:scaleX(1.0000);transform-origin:center top;font-family:'Liberation Sans',sans-serif;-webkit-text-stroke:0px #111">1:30</span>
<div style="left:585px;top:186px;width:1px;height:2px;background:#555"></div>
<div style="left:610px;top:186px;width:1px;height:2px;background:#555"></div>
<div style="left:635px;top:183px;width:1px;height:5px;background:#1a1a1a"></div>
<span class="t" style="left:623.53px;top:170.69px;font-size:11px;line-height:11px;color:#111;font-weight:bold;transform:scaleX(1.0000);transform-origin:center top;font-family:'Liberation Sans',sans-serif;-webkit-text-stroke:0px #111">1:45</span>
<div style="left:659px;top:186px;width:1px;height:2px;background:#555"></div>
<div style="left:684px;top:186px;width:1px;height:2px;background:#555"></div>
<div style="left:709px;top:183px;width:1px;height:5px;background:#1a1a1a"></div>
<span class="t" style="left:697.93px;top:170.69px;font-size:11px;line-height:11px;color:#111;font-weight:bold;transform:scaleX(1.0000);transform-origin:center top;font-family:'Liberation Sans',sans-serif;-webkit-text-stroke:0px #111">2:00</span>
<div style="left:734px;top:186px;width:1px;height:2px;background:#555"></div>
<div style="left:759px;top:186px;width:1px;height:2px;background:#555"></div>
<div style="left:783px;top:183px;width:1px;height:5px;background:#1a1a1a"></div>
<span class="t" style="left:772.33px;top:170.69px;font-size:11px;line-height:11px;color:#111;font-weight:bold;transform:scaleX(1.0000);transform-origin:center top;font-family:'Liberation Sans',sans-serif;-webkit-text-stroke:0px #111">2:15</span>
<div style="left:0px;top:187.5px;width:800px;height:2px;background:#2b2b3c"></div>
<div style="left:0px;top:189px;width:786px;height:306px;background:#62668a"></div>
<div style="left:786px;top:189px;width:14px;height:306px;background:#d6d6d6;border-left:1px solid #f4f4f4;box-sizing:border-box"></div>
<div style="left:786px;top:189px;width:14px;height:15px;background:#f0f0f0"></div>
<svg style="position:absolute;left:789px;top:195px" width="9" height="6" viewBox="0 0 9 6"><path d="M1 5 L4.5 1.5 L8 5" stroke="#606060" stroke-width="1.5" fill="none"/></svg>
<div style="left:1px;top:193px;width:782px;height:257px;background:#1c1c24"></div>
<div style="left:2px;top:194px;width:82px;height:254px;background:#d4e2fa"></div>
<div style="left:2px;top:194px;width:14px;height:14px;background:#cfdaee;border-right:1px solid #b7c0d2;border-bottom:1px solid #b7c0d2;box-sizing:border-box"></div>
<svg style="position:absolute;left:7px;top:199px" width="8" height="7" viewBox="0 0 8 7"><path d="M0.5 0.5 L7.5 6.5 M7.5 0.5 L0.5 6.5" stroke="#111" stroke-width="1.5"/></svg>
<div style="left:17px;top:194px;width:67px;height:14px;background:#cfdaee;border-bottom:1px solid #b7c0d2;box-sizing:border-box"></div>
<span class="t" style="left:20.50px;top:195.69px;font-size:11px;line-height:11px;color:#111;font-weight:normal;transform:scaleX(0.8338);transform-origin:left top;font-family:'Liberation Sans',sans-serif;-webkit-text-stroke:0.25px #111">file_example</span>
<svg style="position:absolute;left:72px;top:199px" width="11" height="5" viewBox="0 0 11 5"><path d="M0 0 H11 L5.5 5 Z" fill="#111"/></svg>
<div style="left:2px;top:208.5px;width:82px;height:1px;background:#aeb6c6"></div>
<div style="left:2px;top:210px;width:41px;height:14.5px;background:#cfdaee;border-right:1px solid #b7c0d2;border-bottom:1px solid #b7c0d2;box-sizing:border-box"></div>
<div style="left:43.5px;top:210px;width:40.5px;height:14.5px;background:#cfdaee;border-bottom:1px solid #b7c0d2;border-left:1px solid #c4ccdc;box-sizing:border-box"></div>
<span class="t" style="left:13.20px;top:211.91px;font-size:10.5px;line-height:10.5px;color:#111;font-weight:normal;transform:scaleX(0.7839);transform-origin:left top;font-family:'Liberation Sans',sans-serif;-webkit-text-stroke:0.25px #111">Mute</span>
<span class="t" style="left:55.50px;top:211.61px;font-size:10.5px;line-height:10.5px;color:#111;font-weight:normal;transform:scaleX(0.8089);transform-origin:left top;font-family:'Liberation Sans',sans-serif;-webkit-text-stroke:0.25px #111">Solo</span>
<div style="left:12px;top:239.5px;width:66px;height:1.5px;background:#8f9098"></div><div style="left:12.0px;top:237.5px;width:1px;height:2px;background:#a0a0a8"></div><div style="left:20.1px;top:237.5px;width:1px;height:2px;background:#a0a0a8"></div><div style="left:28.2px;top:237.5px;width:1px;height:2px;background:#a0a0a8"></div><div style="left:36.4px;top:237.5px;width:1px;height:2px;background:#a0a0a8"></div><div style="left:44.5px;top:237.5px;width:1px;height:2px;background:#a0a0a8"></div><div style="left:52.6px;top:237.5px;width:1px;height:2px;background:#a0a0a8"></div><div style="left:60.8px;top:237.5px;width:1px;height:2px;background:#a0a0a8"></div><div style="left:68.9px;top:237.5px;width:1px;height:2px;background:#a0a0a8"></div><div style="left:77.0px;top:237.5px;width:1px;height:2px;background:#a0a0a8"></div><div style="left:39.4px;top:236.5px;width:8px;height:8px;border-radius:50%;background:#a8a8a8;border:2.2px solid #3b4ff2;box-sizing:border-box"></div>
<div style="left:13px;top:232px;width:4px;height:1px;background:#333"></div>
<div style="left:72px;top:232px;width:5px;height:1px;background:#333"></div>
<div style="left:74px;top:230px;width:1px;height:5px;background:#333"></div>
<span class="t" style="left:12.20px;top:254.26px;font-size:9.5px;line-height:9.5px;color:#111;font-weight:normal;transform:scaleX(0.8496);transform-origin:left top;font-family:'Liberation Sans',sans-serif;-webkit-text-stroke:0.25px #111">L</span>
<span class="t" style="left:69.00px;top:254.26px;font-size:9.5px;line-height:9.5px;color:#111;font-weight:normal;transform:scaleX(0.8727);transform-origin:left top;font-family:'Liberation Sans',sans-serif;-webkit-text-stroke:0.25px #111">R</span>
<div style="left:12px;top:265.5px;width:66px;height:1.5px;background:#8f9098"></div><div style="left:12.0px;top:263.5px;width:1px;height:2px;background:#a0a0a8"></div><div style="left:20.1px;top:263.5px;width:1px;height:2px;background:#a0a0a8"></div><div style="left:28.2px;top:263.5px;width:1px;height:2px;background:#a0a0a8"></div><div style="left:36.4px;top:263.5px;width:1px;height:2px;background:#a0a0a8"></div><div style="left:44.5px;top:263.5px;width:1px;height:2px;background:#a0a0a8"></div><div style="left:52.6px;top:263.5px;width:1px;height:2px;background:#a0a0a8"></div><div style="left:60.8px;top:263.5px;width:1px;height:2px;background:#a0a0a8"></div><div style="left:68.9px;top:263.5px;width:1px;height:2px;background:#a0a0a8"></div><div style="left:77.0px;top:263.5px;width:1px;height:2px;background:#a0a0a8"></div><div style="left:39.4px;top:262.5px;width:8px;height:8px;border-radius:50%;background:#a8a8a8;border:2.2px solid #3b4ff2;box-sizing:border-box"></div>
<span class="t" style="left:4.90px;top:280.07px;font-size:9.6px;line-height:9.6px;color:#111;font-weight:normal;transform:scaleX(0.9764);transform-origin:left top;font-family:'Liberation Sans',sans-serif;-webkit-text-stroke:0.25px #111">Stereo, 44100Hz</span>
<span class="t" style="left:4.90px;top:290.17px;font-size:9.6px;line-height:9.6px;color:#111;font-weight:normal;transform:scaleX(0.9596);transform-origin:left top;font-family:'Liberation Sans',sans-serif;-webkit-text-stroke:0.25px #111">32-bit float</span>
<div style="left:3px;top:433px;width:14px;height:15px;background:#cfdaee;border-right:1px solid #b7c0d2;box-sizing:border-box"></div>
<svg style="position:absolute;left:5px;top:437px" width="10" height="6" viewBox="0 0 10 6"><path d="M0 6 L5 0.5 L10 6 Z" fill="#111"/></svg>
<div style="left:18px;top:433px;width:50px;height:15px;background:#cfdaee;border-right:1px solid #b7c0d2;box-sizing:border-box"></div>
<span class="t" style="left:31.50px;top:435.91px;font-size:10.5px;line-height:10.5px;color:#222;font-weight:normal;transform:scaleX(0.8737);transform-origin:left top;font-family:'Liberation Sans',sans-serif;-webkit-text-stroke:0.25px #222">Select</span>
<div style="left:84px;top:194px;width:1px;height:254px;background:#50525c"></div>
<div style="left:85px;top:194px;width:27.5px;height:254px;background:#d4e2fa"></div>
<div style="left:85.5px;top:208.5px;width:27px;height:1px;background:#aeb6c6"></div>
<div style="left:85px;top:328px;width:28px;height:1px;background:#3a3a44"></div>
<div style="left:112px;top:328px;width:656px;height:1px;background:#1c1c24"></div>
<span class="t" style="left:92.39px;top:211.11px;font-size:10.5px;line-height:10.5px;color:#111;font-weight:bold;transform:scaleX(1.0000);transform-origin:right top;font-family:'Liberation Sans',sans-serif;-webkit-text-stroke:0px #111">1.0</span>
<span class="t" style="left:92.39px;top:235.11px;font-size:10.5px;line-height:10.5px;color:#111;font-weight:normal;transform:scaleX(1.0000);transform-origin:right top;font-family:'Liberation Sans',sans-serif;-webkit-text-stroke:0.25px #111">0.5</span>
<div style="left:108px;top:239.5px;width:4px;height:1.2px;background:#111"></div>
<span class="t" style="left:92.39px;top:264.11px;font-size:10.5px;line-height:10.5px;color:#111;font-weight:bold;transform:scaleX(1.0000);transform-origin:right top;font-family:'Liberation Sans',sans-serif;-webkit-text-stroke:0px #111">0.0</span>
<div style="left:108px;top:268.5px;width:4px;height:1.2px;background:#111"></div>
<span class="t" style="left:88.91px;top:293.11px;font-size:10.5px;line-height:10.5px;color:#111;font-weight:normal;transform:scaleX(1.0000);transform-origin:right top;font-family:'Liberation Sans',sans-serif;-webkit-text-stroke:0.25px #111">-0.5</span>
<div style="left:108px;top:297.5px;width:4px;height:1.2px;background:#111"></div>
<span class="t" style="left:88.91px;top:315.11px;font-size:10.5px;line-height:10.5px;color:#111;font-weight:bold;transform:scaleX(1.0000);transform-origin:right top;font-family:'Liberation Sans',sans-serif;-webkit-text-stroke:0px #111">-1.0</span>
<div style="left:107px;top:327px;width:5px;height:1px;background:#111"></div>
<span class="t" style="left:92.39px;top:330.11px;font-size:10.5px;line-height:10.5px;color:#111;font-weight:bold;transform:scaleX(1.0000);transform-origin:right top;font-family:'Liberation Sans',sans-serif;-webkit-text-stroke:0px #111">1.0</span>
<span class="t" style="left:92.39px;top:355.61px;font-size:10.5px;line-height:10.5px;color:#111;font-weight:normal;transform:scaleX(1.0000);transform-origin:right top;font-family:'Liberation Sans',sans-serif;-webkit-text-stroke:0.25px #111">0.5</span>
<div style="left:108px;top:360.0px;width:4px;height:1.2px;background:#111"></div>
<span class="t" style="left:92.39px;top:384.61px;font-size:10.5px;line-height:10.5px;color:#111;font-weight:bold;transform:scaleX(1.0000);transform-origin:right top;font-family:'Liberation Sans',sans-serif;-webkit-text-stroke:0px #111">0.0</span>
<div style="left:108px;top:389.0px;width:4px;height:1.2px;background:#111"></div>
<span class="t" style="left:88.91px;top:413.61px;font-size:10.5px;line-height:10.5px;color:#111;font-weight:normal;transform:scaleX(1.0000);transform-origin:right top;font-family:'Liberation Sans',sans-serif;-webkit-text-stroke:0.25px #111">-0.5</span>
<div style="left:108px;top:418.0px;width:4px;height:1.2px;background:#111"></div>
<span class="t" style="left:88.91px;top:435.61px;font-size:10.5px;line-height:10.5px;color:#111;font-weight:bold;transform:scaleX(1.0000);transform-origin:right top;font-family:'Liberation Sans',sans-serif;-webkit-text-stroke:0px #111">-1.0</span>
<div style="left:107px;top:447px;width:5px;height:1px;background:#111"></div>
<div style="left:112px;top:194px;width:669px;height:254px;background:#d8d8d8"></div>
<div style="left:768px;top:194px;width:1px;height:254px;background:#f4f4f4"></div>
<div style="left:112px;top:194.5px;width:656px;height:253.5px;background:#1c1c24;border-radius:6px 6px 0 0"></div>
<div style="left:113px;top:195.5px;width:654px;height:252.5px;background:#c6c6c6;border-radius:5px 5px 0 0;overflow:hidden"><div style="left:0;top:1px;width:654px;height:13px;background:#dedede"></div></div>
<div style="left:113px;top:328px;width:654px;height:1px;background:#1c1c24"></div>
<span class="t" style="left:117.50px;top:198.37px;font-size:10.2px;line-height:10.2px;color:#111;font-weight:normal;transform:scaleX(1.0487);transform-origin:left top;font-family:'Liberation Sans',sans-serif;-webkit-text-stroke:0.25px #111">file_example_MP3_5MG</span>
<svg style="position:absolute;left:0;top:0" width="800" height="495" viewBox="0 0 800 495"><clipPath id="c1"><rect x="113" y="210" width="654" height="118"/></clipPath><clipPath id="c2"><rect x="113" y="329.5" width="654" height="118.5"/></clipPath><g clip-path="url(#c1)"><path d="M113.5 268.0V269.6M114.5 267.4V270.3M115.5 267.7V269.8M116.5 266.7V270.7M117.5 243.2V295.8M118.5 241.8V295.8M119.5 214.8V312.5M120.5 218.7V322.8M121.5 234.2V309.0M122.5 225.4V309.0M123.5 245.8V290.8M124.5 229.0V304.9M125.5 229.4V301.6M126.5 254.6V288.2M127.5 244.1V312.8M128.5 242.3V304.9M129.5 231.9V308.4M130.5 226.6V317.8M131.5 240.5V318.8M132.5 236.6V302.9M133.5 250.7V286.6M134.5 249.8V290.7M135.5 251.0V291.4M136.5 229.1V298.4M137.5 229.3V314.5M138.5 229.2V304.0M139.5 243.0V305.3M140.5 246.8V291.1M141.5 214.8V322.8M142.5 220.5V309.3M143.5 244.6V294.5M144.5 229.0V290.2M145.5 242.0V286.6M146.5 254.8V286.4M147.5 245.9V287.9M148.5 240.7V291.1M149.5 231.8V297.9M150.5 225.5V306.5M151.5 229.1V322.8M152.5 214.8V309.5M153.5 232.0V287.3M154.5 239.2V296.1M155.5 230.7V310.8M156.5 225.4V310.5M157.5 237.2V286.7M158.5 233.0V297.9M159.5 238.1V293.7M160.5 235.4V296.9M161.5 256.3V293.8M162.5 254.1V283.6M163.5 248.5V297.5M164.5 229.2V308.5M165.5 223.3V290.2M166.5 227.0V308.2M167.5 250.1V297.9M168.5 243.9V293.5M169.5 234.2V284.1M170.5 253.8V301.6M171.5 233.5V295.1M172.5 245.6V292.2M173.5 226.8V313.2M174.5 240.7V306.9M175.5 238.4V295.0M176.5 228.3V304.5M177.5 232.3V297.2M178.5 243.5V295.8M179.5 240.2V300.2M180.5 245.3V309.8M181.5 242.6V293.3M182.5 216.1V321.5M183.5 244.2V297.4M184.5 231.2V300.9M185.5 241.4V294.9M186.5 239.5V289.7M187.5 242.6V308.1M188.5 253.0V297.7M189.5 241.3V310.6M190.5 248.6V308.0M191.5 225.9V313.4M192.5 214.8V311.5M193.5 220.1V312.1M194.5 228.0V313.3M195.5 241.3V301.8M602.5 255.8V291.7M603.5 233.0V298.7M604.5 250.8V294.7M605.5 247.1V289.5M606.5 228.3V301.2M607.5 225.6V303.2M608.5 246.3V315.3M609.5 214.8V322.8M610.5 217.3V314.4M611.5 235.6V295.4M612.5 238.2V306.8M613.5 228.1V310.9M614.5 237.5V301.5M615.5 237.3V300.8M616.5 242.1V289.2M617.5 243.3V290.7M618.5 233.5V299.0M619.5 249.4V306.3M620.5 240.5V304.2M621.5 239.8V300.4M622.5 214.8V310.0M623.5 238.3V301.5M624.5 231.1V306.5M625.5 245.9V290.4M626.5 232.9V299.6M627.5 249.8V312.4M628.5 233.5V299.1M629.5 239.5V301.2M630.5 231.4V304.1M631.5 239.2V296.9M632.5 237.3V296.3M633.5 214.8V311.5M634.5 221.8V305.1M635.5 218.3V298.6M636.5 221.9V312.3M637.5 226.7V296.0M638.5 243.5V317.1M639.5 237.8V300.0M640.5 235.1V292.5M641.5 214.8V322.8M642.5 219.0V320.3M643.5 214.8V313.9M644.5 234.6V308.3M645.5 233.5V310.1M646.5 234.7V302.4M647.5 241.0V298.6M648.5 231.8V299.0M649.5 250.4V290.9M650.5 228.1V303.6M651.5 226.1V312.8M652.5 248.6V297.9M653.5 232.3V300.4M654.5 230.2V286.6M655.5 249.1V293.4M656.5 225.6V288.9M657.5 233.7V308.6M658.5 214.8V301.7M659.5 216.2V318.2M660.5 222.4V310.6M661.5 237.5V293.3M662.5 245.3V284.8M663.5 252.2V287.3M664.5 241.5V293.2M665.5 250.1V291.4M666.5 246.2V293.9M667.5 239.9V299.9M668.5 254.7V288.1M669.5 238.8V294.8M670.5 230.9V302.3M671.5 216.8V287.8M672.5 232.7V302.3M673.5 240.9V313.8M674.5 237.8V298.9M675.5 228.2V283.1M676.5 234.1V291.8M677.5 247.6V303.0M678.5 240.4V308.6M679.5 237.1V304.8M680.5 243.9V291.5M681.5 235.3V285.5M682.5 229.9V285.5M683.5 223.7V302.2M684.5 233.5V294.3M685.5 244.3V290.7M686.5 219.6V319.9M687.5 215.5V322.4M688.5 226.4V292.9M689.5 252.0V322.8M690.5 233.9V298.8M691.5 235.4V299.9M692.5 236.7V296.3M693.5 250.1V280.9M694.5 254.2V289.5M695.5 253.2V295.4M696.5 249.2V293.0M697.5 250.8V297.8M698.5 226.7V303.8M699.5 248.7V291.0M700.5 246.3V311.8M701.5 248.4V297.2M702.5 243.2V288.6M703.5 245.2V287.9M704.5 251.0V287.1M705.5 250.3V296.4M706.5 239.7V289.3M707.5 254.1V298.7M708.5 242.7V294.5M709.5 248.7V294.9M710.5 254.5V291.1M711.5 255.2V296.3M712.5 242.5V296.1M713.5 252.1V289.9M714.5 254.6V284.0M715.5 253.3V287.2M716.5 255.6V281.9M717.5 244.5V291.2M718.5 252.8V293.5M719.5 248.9V285.0M720.5 252.1V287.0M721.5 254.3V284.7M722.5 251.0V280.3M723.5 238.6V295.6M724.5 237.2V294.8M725.5 244.2V306.3M726.5 239.0V306.3M727.5 252.8V297.2M728.5 247.7V286.6M729.5 250.9V287.0M730.5 259.8V281.8M731.5 253.8V278.7M732.5 260.0V292.5M733.5 252.6V277.3M734.5 255.8V282.7M735.5 257.9V281.8M736.5 248.8V280.4M737.5 251.9V283.8M738.5 252.6V285.5M739.5 261.0V277.4M740.5 251.7V285.2M741.5 248.9V280.6M742.5 243.1V293.8M743.5 251.7V289.7M744.5 252.1V287.1M745.5 250.7V285.9M746.5 261.4V289.6M747.5 249.5V284.0M748.5 260.1V281.7M749.5 251.7V286.2M750.5 250.1V286.3M751.5 221.8V309.8M752.5 228.8V301.8M753.5 251.1V286.5M754.5 252.9V284.7M755.5 255.6V282.0M756.5 258.7V278.9M757.5 260.7V276.9M758.5 262.4V275.2M759.5 262.5V275.1M760.5 264.3V273.3M761.5 265.2V272.4M762.5 265.6V272.0M763.5 266.3V271.3M764.5 266.8V270.8M765.5 267.1V270.5M766.5 267.3V270.3" stroke="#3232c8" stroke-width="1" fill="none"/><path d="M113.5 267.8V269.8M114.5 267.8V269.8M115.5 267.8V269.8M116.5 267.8V269.8M117.5 265.8V271.8M118.5 265.8V271.8M119.5 261.7V275.9M120.5 262.5V275.1M121.5 262.3V275.3M122.5 262.6V275.0M123.5 262.8V274.8M124.5 262.4V275.2M125.5 262.7V274.9M126.5 262.2V275.4M127.5 262.7V274.9M128.5 261.7V275.9M129.5 262.4V275.2M130.5 261.7V275.9M131.5 262.8V274.8M132.5 261.7V275.9M133.5 261.6V276.0M134.5 261.8V275.8M135.5 262.6V275.0M136.5 262.1V275.5M137.5 262.9V274.7M138.5 261.9V275.7M139.5 262.9V274.7M140.5 262.1V275.5M141.5 262.5V275.1M142.5 262.7V274.9M143.5 262.6V275.0M144.5 263.0V274.6M145.5 261.7V275.9M146.5 262.4V275.2M147.5 262.0V275.6M148.5 262.9V274.7M149.5 261.8V275.8M150.5 262.8V274.8M151.5 262.7V274.9M152.5 262.3V275.3M153.5 262.9V274.7M154.5 262.3V275.3M155.5 262.5V275.1M156.5 261.8V275.8M157.5 262.3V275.3M158.5 262.0V275.6M159.5 262.9V274.7M160.5 262.3V275.3M161.5 262.1V275.5M162.5 262.0V275.6M163.5 262.3V275.3M164.5 262.6V275.0M165.5 262.1V275.5M166.5 262.3V275.3M167.5 263.0V274.6M168.5 262.7V274.9M169.5 261.7V275.9M170.5 262.7V274.9M171.5 262.4V275.2M172.5 263.0V274.6M173.5 261.7V275.9M174.5 262.5V275.1M175.5 262.6V275.0M176.5 262.5V275.1M177.5 261.7V275.9M178.5 261.9V275.7M179.5 262.3V275.3M180.5 262.1V275.5M181.5 262.7V274.9M182.5 262.4V275.2M183.5 262.6V275.0M184.5 262.3V275.3M185.5 262.8V274.8M186.5 262.7V274.9M187.5 263.0V274.6M188.5 263.0V274.6M189.5 262.7V274.9M190.5 262.0V275.6M191.5 262.7V274.9M192.5 262.1V275.5M193.5 262.7V274.9M194.5 261.8V275.8M195.5 262.6V275.0M602.5 263.3V274.3M603.5 263.2V274.4M604.5 262.8V274.8M605.5 263.8V273.8M606.5 263.3V274.3M607.5 264.0V273.6M608.5 262.8V274.8M609.5 264.2V273.4M610.5 264.2V273.4M611.5 263.9V273.7M612.5 263.7V273.9M613.5 263.1V274.5M614.5 263.2V274.4M615.5 263.8V273.8M616.5 262.9V274.7M617.5 262.9V274.7M618.5 262.9V274.7M619.5 263.3V274.3M620.5 263.1V274.5M621.5 263.0V274.6M622.5 263.2V274.4M623.5 263.2V274.4M624.5 263.4V274.2M625.5 264.0V273.6M626.5 263.5V274.1M627.5 263.1V274.5M628.5 262.8V274.8M629.5 263.8V273.8M630.5 263.9V273.7M631.5 263.3V274.3M632.5 263.9V273.7M633.5 263.4V274.2M634.5 263.8V273.8M635.5 263.0V274.6M636.5 264.2V273.4M637.5 263.6V274.0M638.5 263.7V273.9M639.5 264.0V273.6M640.5 262.9V274.7M641.5 262.9V274.7M642.5 263.6V274.0M643.5 263.5V274.1M644.5 264.1V273.5M645.5 263.4V274.2M646.5 263.3V274.3M647.5 263.9V273.7M648.5 264.1V273.5M649.5 264.1V273.5M650.5 263.7V273.9M651.5 263.1V274.5M652.5 264.0V273.6M653.5 264.0V273.6M654.5 262.9V274.7M655.5 264.0V273.6M656.5 264.0V273.6M657.5 263.4V274.2M658.5 263.8V273.8M659.5 264.0V273.6M660.5 263.4V274.2M661.5 263.3V274.3M662.5 263.3V274.3M663.5 263.4V274.2M664.5 262.9V274.7M665.5 263.1V274.5M666.5 263.7V273.9M667.5 262.9V274.7M668.5 264.2V273.4M669.5 263.5V274.1M670.5 264.1V273.5M671.5 263.2V274.4M672.5 264.1V273.5M673.5 263.8V273.8M674.5 263.3V274.3M675.5 263.9V273.7M676.5 263.7V273.9M677.5 262.8V274.8M678.5 263.2V274.4M679.5 264.0V273.6M680.5 263.2V274.4M681.5 263.7V273.9M682.5 262.9V274.7M683.5 263.1V274.5M684.5 263.1V274.5M685.5 263.8V273.8M686.5 263.0V274.6M687.5 263.2V274.4M688.5 264.0V273.6M689.5 263.5V274.1M690.5 263.8V273.8M691.5 264.1V273.5M692.5 263.8V273.8M693.5 264.3V273.3M694.5 263.1V274.5M695.5 263.5V274.1M696.5 263.4V274.2M697.5 263.8V273.8M698.5 263.3V274.3M699.5 264.3V273.3M700.5 264.4V273.2M701.5 264.3V273.3M702.5 263.5V274.1M703.5 263.8V273.8M704.5 263.7V273.9M705.5 263.8V273.8M706.5 263.9V273.7M707.5 264.4V273.2M708.5 263.6V274.0M709.5 263.6V274.0M710.5 264.2V273.4M711.5 264.1V273.5M712.5 264.0V273.6M713.5 264.8V272.8M714.5 264.1V273.5M715.5 264.3V273.3M716.5 264.1V273.5M717.5 263.9V273.7M718.5 264.7V272.9M719.5 264.8V272.8M720.5 264.8V272.8M721.5 264.4V273.2M722.5 264.2V273.4M723.5 264.2V273.4M724.5 264.4V273.2M725.5 264.3V273.3M726.5 264.4V273.2M727.5 264.4V273.2M728.5 265.3V272.3M729.5 264.5V273.1M730.5 264.5V273.1M731.5 264.8V272.8M732.5 264.5V273.1M733.5 264.9V272.7M734.5 264.8V272.8M735.5 265.3V272.3M736.5 264.6V273.0M737.5 265.0V272.6M738.5 265.1V272.5M739.5 265.1V272.5M740.5 265.1V272.5M741.5 265.3V272.3M742.5 265.2V272.4M743.5 265.5V272.1M744.5 265.8V271.8M745.5 265.5V272.1M746.5 265.5V272.1M747.5 265.3V272.3M748.5 265.9V271.7M749.5 265.4V272.2M750.5 265.6V272.0M751.5 265.5V272.1M752.5 263.4V274.2M753.5 263.9V273.7M754.5 264.4V273.2M755.5 264.9V272.7M756.5 265.4V272.2M757.5 265.8V271.8M758.5 266.3V271.3M759.5 266.7V270.9M760.5 267.1V270.5M761.5 267.4V270.2M762.5 267.8V269.8M763.5 268.1V269.6M764.5 268.3V269.3M765.5 268.5V269.1M766.5 268.5V269.1" stroke="#6464dc" stroke-width="1" fill="none"/></g><g clip-path="url(#c2)"><path d="M113.5 388.0V390.7M114.5 388.1V390.9M115.5 387.9V391.2M116.5 387.8V390.4M117.5 364.5V415.3M118.5 362.5V413.5M119.5 359.2V432.2M120.5 344.5V436.7M121.5 360.0V415.7M122.5 348.1V413.3M123.5 365.5V417.8M124.5 344.4V427.8M125.5 342.5V438.3M126.5 366.8V416.7M127.5 341.4V443.5M128.5 353.2V425.7M129.5 364.9V422.0M130.5 363.6V406.5M131.5 371.8V429.1M132.5 351.0V416.4M133.5 355.5V423.4M134.5 348.7V425.1M135.5 353.0V421.6M136.5 355.7V423.3M137.5 357.2V419.1M138.5 360.7V421.7M139.5 370.8V413.7M140.5 370.2V422.8M141.5 352.5V407.2M142.5 348.3V415.2M143.5 356.9V422.7M144.5 340.0V428.0M145.5 344.5V425.4M146.5 372.3V407.4M147.5 369.9V403.9M148.5 366.6V412.6M149.5 368.5V408.6M150.5 364.6V422.3M151.5 355.1V418.7M152.5 344.1V425.7M153.5 367.7V421.4M154.5 338.5V443.5M155.5 348.9V437.4M156.5 363.1V426.4M157.5 369.4V430.9M158.5 365.4V413.7M159.5 356.7V405.5M160.5 369.0V414.5M161.5 362.6V409.7M162.5 356.3V422.1M163.5 359.8V420.7M164.5 360.6V402.6M165.5 377.6V415.7M166.5 360.9V415.7M167.5 348.5V424.0M168.5 353.7V423.3M169.5 367.9V427.5M170.5 351.1V442.6M171.5 372.2V412.2M172.5 349.6V424.6M173.5 369.8V409.1M174.5 377.0V403.4M175.5 355.7V424.2M176.5 355.1V424.6M177.5 352.5V426.9M178.5 371.7V410.4M179.5 358.3V418.3M180.5 345.0V440.1M181.5 369.8V425.7M182.5 357.0V420.6M183.5 371.4V423.5M184.5 367.9V412.6M185.5 364.5V413.8M186.5 358.8V414.0M187.5 357.2V416.6M188.5 359.4V418.5M189.5 365.1V419.0M190.5 363.6V419.3M191.5 374.2V421.0M192.5 366.7V409.8M193.5 350.0V415.6M194.5 364.0V433.0M195.5 357.9V421.4M602.5 349.3V422.4M603.5 341.8V432.2M604.5 335.5V412.1M605.5 356.5V415.2M606.5 337.1V433.1M607.5 343.8V438.1M608.5 357.6V433.0M609.5 356.6V427.1M610.5 358.5V424.9M611.5 372.5V412.5M612.5 366.2V403.6M613.5 361.8V411.5M614.5 355.8V416.3M615.5 364.9V411.3M616.5 371.0V411.9M617.5 353.6V426.5M618.5 372.4V417.0M619.5 359.9V422.4M620.5 335.5V417.1M621.5 359.1V434.9M622.5 352.7V407.3M623.5 344.1V408.8M624.5 345.0V414.1M625.5 339.9V431.4M626.5 352.6V418.0M627.5 357.8V405.3M628.5 353.0V402.2M629.5 371.3V405.4M630.5 370.6V410.2M631.5 363.3V413.1M632.5 360.1V432.8M633.5 368.5V418.8M634.5 361.1V408.1M635.5 372.6V415.0M636.5 361.3V411.3M637.5 377.2V424.8M638.5 359.7V419.9M639.5 357.8V405.7M640.5 362.7V405.9M641.5 362.5V408.0M642.5 367.8V422.5M643.5 365.0V420.9M644.5 358.9V411.9M645.5 348.1V430.9M646.5 363.2V413.8M647.5 368.3V443.5M648.5 342.5V435.2M649.5 364.8V416.9M650.5 359.4V414.0M651.5 359.2V418.0M652.5 361.8V420.3M653.5 357.0V418.0M654.5 364.6V418.0M655.5 359.4V416.5M656.5 359.7V417.9M657.5 353.9V420.5M658.5 369.8V430.0M659.5 341.3V428.9M660.5 345.5V441.3M661.5 356.9V415.2M662.5 367.1V412.8M663.5 367.4V415.7M664.5 360.1V413.1M665.5 374.2V411.2M666.5 371.7V416.0M667.5 358.1V414.7M668.5 374.3V408.8M669.5 364.0V405.5M670.5 363.9V402.5M671.5 366.9V412.7M672.5 357.9V406.0M673.5 373.9V401.6M674.5 367.4V409.5M675.5 364.0V419.7M676.5 346.8V413.8M677.5 345.2V436.4M678.5 361.4V422.9M679.5 353.3V434.9M680.5 374.6V409.3M681.5 374.4V417.0M682.5 372.8V408.0M683.5 368.8V416.3M684.5 369.4V432.7M685.5 365.1V417.7M686.5 367.1V408.2M687.5 369.3V413.4M688.5 355.1V418.4M689.5 365.7V412.1M690.5 376.4V403.0M691.5 356.2V413.0M692.5 367.8V410.9M693.5 373.1V408.9M694.5 353.0V406.7M695.5 360.6V411.9M696.5 367.3V408.6M697.5 350.2V423.0M698.5 363.8V422.3M699.5 351.2V419.7M700.5 372.6V413.0M701.5 368.7V407.2M702.5 360.8V419.6M703.5 371.0V405.2M704.5 361.5V416.3M705.5 364.2V418.6M706.5 377.0V401.7M707.5 368.5V409.7M708.5 364.9V411.4M709.5 366.2V419.2M710.5 377.0V405.9M711.5 370.0V409.2M712.5 369.2V412.0M713.5 362.3V429.6M714.5 356.8V428.2M715.5 337.9V418.3M716.5 369.5V416.0M717.5 363.1V415.4M718.5 365.0V421.6M719.5 361.5V413.6M720.5 363.9V408.7M721.5 374.6V403.5M722.5 376.7V401.8M723.5 378.0V407.9M724.5 361.3V413.8M725.5 375.5V404.2M726.5 364.7V413.4M727.5 365.2V412.8M728.5 379.7V417.7M729.5 370.3V413.1M730.5 359.3V419.7M731.5 360.6V416.7M732.5 350.9V425.6M733.5 366.5V423.2M734.5 376.0V406.4M735.5 379.1V404.7M736.5 371.0V408.3M737.5 379.2V406.4M738.5 372.9V410.1M739.5 371.8V411.1M740.5 369.7V404.5M741.5 381.4V400.9M742.5 379.7V401.1M743.5 372.3V408.0M744.5 380.7V401.9M745.5 380.8V400.6M746.5 364.5V405.8M747.5 369.7V403.7M748.5 367.9V407.1M749.5 381.6V399.3M750.5 379.9V406.1M751.5 342.5V430.5M752.5 349.5V422.5M753.5 371.4V407.6M754.5 374.6V404.4M755.5 377.1V401.9M756.5 378.1V400.9M757.5 379.8V399.2M758.5 381.8V397.2M759.5 384.2V394.8M760.5 384.4V394.6M761.5 385.7V393.3M762.5 386.3V392.7M763.5 387.2V391.8M764.5 387.5V391.5M765.5 387.8V391.2M766.5 388.0V391.0" stroke="#3232c8" stroke-width="1" fill="none"/><path d="M113.5 388.5V390.5M114.5 388.5V390.5M115.5 388.5V390.5M116.5 388.5V390.5M117.5 386.5V392.5M118.5 386.5V392.5M119.5 383.2V395.8M120.5 382.5V396.5M121.5 382.5V396.5M122.5 383.1V395.9M123.5 383.3V395.7M124.5 383.6V395.4M125.5 383.1V395.9M126.5 383.1V395.9M127.5 383.4V395.6M128.5 383.4V395.6M129.5 382.6V396.4M130.5 382.7V396.3M131.5 382.9V396.1M132.5 383.4V395.6M133.5 382.4V396.6M134.5 382.4V396.6M135.5 382.6V396.4M136.5 383.2V395.8M137.5 382.5V396.5M138.5 383.0V396.0M139.5 382.9V396.1M140.5 382.5V396.5M141.5 383.0V396.0M142.5 382.9V396.1M143.5 382.4V396.6M144.5 382.6V396.4M145.5 382.4V396.6M146.5 382.7V396.3M147.5 383.5V395.5M148.5 383.2V395.8M149.5 382.8V396.2M150.5 382.7V396.3M151.5 383.4V395.6M152.5 383.3V395.7M153.5 383.1V395.9M154.5 383.5V395.5M155.5 383.6V395.4M156.5 383.4V395.6M157.5 382.4V396.6M158.5 383.1V395.9M159.5 382.7V396.3M160.5 382.6V396.4M161.5 383.0V396.0M162.5 382.6V396.4M163.5 382.6V396.4M164.5 383.0V396.0M165.5 382.4V396.6M166.5 383.2V395.8M167.5 383.7V395.3M168.5 383.2V395.8M169.5 382.3V396.7M170.5 382.6V396.4M171.5 383.0V396.0M172.5 383.2V395.8M173.5 383.3V395.7M174.5 383.2V395.8M175.5 383.6V395.4M176.5 383.0V396.0M177.5 382.9V396.1M178.5 383.5V395.5M179.5 383.1V395.9M180.5 383.4V395.6M181.5 383.3V395.7M182.5 383.4V395.6M183.5 383.3V395.7M184.5 382.8V396.2M185.5 383.2V395.8M186.5 382.8V396.2M187.5 383.2V395.8M188.5 382.4V396.6M189.5 382.9V396.1M190.5 382.8V396.2M191.5 383.5V395.5M192.5 382.9V396.1M193.5 383.3V395.7M194.5 383.2V395.8M195.5 382.9V396.1M602.5 383.8V395.2M603.5 384.1V394.9M604.5 383.8V395.2M605.5 384.7V394.3M606.5 384.2V394.8M607.5 384.2V394.8M608.5 383.7V395.3M609.5 383.6V395.4M610.5 384.3V394.7M611.5 384.6V394.4M612.5 384.7V394.3M613.5 384.1V394.9M614.5 383.9V395.1M615.5 383.8V395.2M616.5 383.7V395.3M617.5 384.6V394.4M618.5 384.2V394.8M619.5 384.4V394.6M620.5 384.4V394.6M621.5 384.5V394.5M622.5 383.7V395.3M623.5 384.2V394.8M624.5 384.3V394.7M625.5 384.7V394.3M626.5 384.2V394.8M627.5 384.3V394.7M628.5 383.9V395.1M629.5 383.8V395.2M630.5 384.5V394.5M631.5 383.9V395.1M632.5 383.7V395.3M633.5 384.6V394.4M634.5 384.7V394.3M635.5 384.2V394.8M636.5 384.3V394.7M637.5 384.0V395.0M638.5 384.2V394.8M639.5 383.6V395.4M640.5 383.5V395.5M641.5 384.0V395.0M642.5 383.6V395.4M643.5 383.6V395.4M644.5 383.5V395.5M645.5 383.6V395.4M646.5 384.8V394.2M647.5 384.5V394.5M648.5 384.9V394.1M649.5 384.7V394.3M650.5 384.8V394.2M651.5 384.3V394.7M652.5 383.5V395.5M653.5 383.6V395.4M654.5 384.8V394.2M655.5 384.5V394.5M656.5 384.8V394.2M657.5 384.6V394.4M658.5 384.3V394.7M659.5 384.8V394.2M660.5 384.5V394.5M661.5 384.1V394.9M662.5 383.5V395.5M663.5 384.6V394.4M664.5 383.5V395.5M665.5 383.9V395.1M666.5 383.9V395.1M667.5 383.9V395.1M668.5 384.4V394.6M669.5 383.6V395.4M670.5 384.3V394.7M671.5 384.5V394.5M672.5 384.1V394.9M673.5 383.8V395.2M674.5 384.0V395.0M675.5 383.7V395.3M676.5 384.7V394.3M677.5 383.8V395.2M678.5 384.9V394.1M679.5 384.7V394.3M680.5 383.8V395.2M681.5 384.6V394.4M682.5 384.2V394.8M683.5 384.5V394.5M684.5 384.4V394.6M685.5 383.5V395.5M686.5 383.7V395.3M687.5 383.5V395.5M688.5 384.6V394.4M689.5 384.0V395.0M690.5 383.9V395.1M691.5 383.8V395.2M692.5 384.2V394.8M693.5 384.4V394.6M694.5 384.9V394.1M695.5 384.7V394.3M696.5 384.9V394.1M697.5 385.1V393.9M698.5 384.1V394.9M699.5 384.4V394.6M700.5 384.3V394.7M701.5 384.9V394.1M702.5 384.9V394.1M703.5 384.6V394.4M704.5 385.0V394.0M705.5 384.6V394.4M706.5 385.0V394.0M707.5 385.2V393.8M708.5 385.3V393.7M709.5 385.0V394.0M710.5 384.9V394.1M711.5 384.9V394.1M712.5 384.4V394.6M713.5 384.9V394.1M714.5 385.2V393.8M715.5 384.5V394.5M716.5 385.7V393.3M717.5 385.1V393.9M718.5 385.3V393.7M719.5 384.7V394.3M720.5 385.4V393.6M721.5 385.5V393.5M722.5 385.1V393.9M723.5 384.9V394.1M724.5 385.1V393.9M725.5 385.0V394.0M726.5 385.1V393.9M727.5 385.8V393.2M728.5 385.3V393.7M729.5 386.0V393.0M730.5 386.0V393.0M731.5 385.3V393.7M732.5 385.2V393.8M733.5 386.0V393.0M734.5 385.9V393.1M735.5 386.0V393.0M736.5 386.0V393.0M737.5 385.5V393.5M738.5 385.7V393.3M739.5 386.0V393.0M740.5 386.3V392.7M741.5 386.4V392.6M742.5 385.7V393.3M743.5 385.6V393.4M744.5 385.7V393.3M745.5 386.0V393.0M746.5 385.8V393.2M747.5 386.1V392.9M748.5 386.3V392.7M749.5 385.9V393.1M750.5 386.3V392.7M751.5 386.5V392.5M752.5 384.1V394.9M753.5 384.6V394.4M754.5 385.1V393.9M755.5 385.6V393.4M756.5 386.1V392.9M757.5 386.5V392.5M758.5 387.0V392.0M759.5 387.4V391.6M760.5 387.8V391.2M761.5 388.1V390.9M762.5 388.5V390.5M763.5 388.8V390.2M764.5 389.0V390.0M765.5 389.2V389.8M766.5 389.2V389.8" stroke="#6464dc" stroke-width="1" fill="none"/></g></svg>
<div style="left:193px;top:132px;width:412px;height:345px;background:#f0f0f0;border:1px solid #9a9ca8;box-sizing:border-box;box-shadow:1px 2px 6px rgba(0,0,0,0.28)"></div>
<div style="left:194px;top:133px;width:410px;height:26px;background:#fff"></div>
<div style="left:194px;top:159px;width:1.5px;height:317px;background:#fbfbfb"></div>
<div style="left:194px;top:474.5px;width:410px;height:1.5px;background:#fbfbfb"></div>
<span class="t" style="left:201.20px;top:140.93px;font-size:10.6px;line-height:10.6px;color:#111;font-weight:normal;transform:scaleX(0.9674);transform-origin:left top;font-family:'Liberation Sans',sans-serif;-webkit-text-stroke:0.25px #111">Noise Reduction</span>
<svg style="position:absolute;left:586px;top:140px" width="11" height="11" viewBox="0 0 11 11"><path d="M0.6 0.6 L10.4 10.4 M10.4 0.6 L0.6 10.4" stroke="#222" stroke-width="1.1"/></svg>
<div style="left:199px;top:169.5px;width:400px;height:76px;border:1px solid #dcdcdc;box-sizing:border-box"></div>
<div style="left:200px;top:170.5px;width:398px;height:74px;border:1px solid #fdfdfd;border-top:none;border-left:none;box-sizing:border-box"></div>
<div style="left:204px;top:165.5px;width:32px;height:8px;background:#f0f0f0"></div>
<span class="t" style="left:206.80px;top:166.00px;font-size:10.4px;line-height:10.4px;color:#111;font-weight:normal;transform:scaleX(0.8753);transform-origin:left top;font-family:'Liberation Sans',sans-serif;-webkit-text-stroke:0.25px #111">Step 1</span>
<span class="t" style="left:207.60px;top:185.30px;font-size:10.4px;line-height:10.4px;color:#111;font-weight:normal;transform:scaleX(0.9922);transform-origin:left top;font-family:'Liberation Sans',sans-serif;-webkit-text-stroke:0.25px #111">Select a few seconds of just noise so Audacity knows what to filter out,</span>
<span class="t" style="left:207.60px;top:197.30px;font-size:10.4px;line-height:10.4px;color:#111;font-weight:normal;transform:scaleX(0.9809);transform-origin:left top;font-family:'Liberation Sans',sans-serif;-webkit-text-stroke:0.25px #111">then click Get Noise Profile:</span>
<div style="left:352px;top:219px;width:93px;height:19px;background:#e1e1e1;border:1px solid #adadad;box-sizing:border-box"></div>
<span class="t" style="left:360.00px;top:224.70px;font-size:10.4px;line-height:10.4px;color:#111;font-weight:normal;transform:scaleX(0.9701);transform-origin:left top;font-family:'Liberation Sans',sans-serif;-webkit-text-stroke:0.25px #111"><u>G</u>et Noise Profile</span>
<div style="left:199px;top:261.5px;width:400px;height:169.5px;border:1px solid #dcdcdc;box-sizing:border-box"></div>
<div style="left:200px;top:262.5px;width:398px;height:167.5px;border:1px solid #fdfdfd;border-top:none;border-left:none;box-sizing:border-box"></div>
<div style="left:204px;top:257.5px;width:32px;height:8px;background:#f0f0f0"></div>
<span class="t" style="left:206.50px;top:258.50px;font-size:10.4px;line-height:10.4px;color:#111;font-weight:normal;transform:scaleX(0.9053);transform-origin:left top;font-family:'Liberation Sans',sans-serif;-webkit-text-stroke:0.25px #111">Step 2</span>
<span class="t" style="left:207.60px;top:277.30px;font-size:10.4px;line-height:10.4px;color:#111;font-weight:normal;transform:scaleX(1.0008);transform-origin:left top;font-family:'Liberation Sans',sans-serif;-webkit-text-stroke:0.25px #111">Select all of the audio you want filtered, choose how much noise you want</span>
<span class="t" style="left:207.60px;top:290.30px;font-size:10.4px;line-height:10.4px;color:#111;font-weight:normal;transform:scaleX(0.9999);transform-origin:left top;font-family:'Liberation Sans',sans-serif;-webkit-text-stroke:0.25px #111">filtered out, and then click 'OK' to reduce noise.</span>
<span class="t" style="left:207.00px;top:329.20px;font-size:10.4px;line-height:10.4px;color:#111;font-weight:normal;transform:scaleX(0.9866);transform-origin:left top;font-family:'Liberation Sans',sans-serif;-webkit-text-stroke:0.25px #111"><u>N</u>oise reduction (dB):</span>
<div style="left:356px;top:323px;width:96px;height:20.5px;background:#fff;border:1px solid #7a7a7a;box-sizing:border-box"></div>
<span class="t" style="left:362.40px;top:329.00px;font-size:10.4px;line-height:10.4px;color:#111;font-weight:normal;transform:scaleX(0.8562);transform-origin:left top;font-family:'Liberation Sans',sans-serif;-webkit-text-stroke:0.25px #111">12</span>
<div style="left:467px;top:331.5px;width:117.5px;height:4px;background:#e7eaea;border:1px solid #d6d6d6;box-sizing:border-box"></div>
<svg style="position:absolute;left:495px;top:326px" width="9" height="17" viewBox="0 0 9 17"><path d="M0 0 H9 V12.5 L4.5 16.5 L0 12.5 Z" fill="#0a78d7"/></svg>
<span class="t" style="left:207.00px;top:357.90px;font-size:10.4px;line-height:10.4px;color:#111;font-weight:normal;transform:scaleX(0.9704);transform-origin:left top;font-family:'Liberation Sans',sans-serif;-webkit-text-stroke:0.25px #111"><u>S</u>ensitivity:</span>
<div style="left:356px;top:352px;width:96px;height:20.5px;background:#fff;border:1px solid #7a7a7a;box-sizing:border-box"></div>
<span class="t" style="left:362.40px;top:358.00px;font-size:10.4px;line-height:10.4px;color:#111;font-weight:normal;transform:scaleX(0.8764);transform-origin:left top;font-family:'Liberation Sans',sans-serif;-webkit-text-stroke:0.25px #111">10.00</span>
<div style="left:467px;top:360.5px;width:117.5px;height:4px;background:#e7eaea;border:1px solid #d6d6d6;box-sizing:border-box"></div>
<svg style="position:absolute;left:512.5px;top:355px" width="9" height="17" viewBox="0 0 9 17"><path d="M0 0 H9 V12.5 L4.5 16.5 L0 12.5 Z" fill="#0a78d7"/></svg>
<span class="t" style="left:207.00px;top:387.30px;font-size:10.4px;line-height:10.4px;color:#111;font-weight:normal;transform:scaleX(0.9948);transform-origin:left top;font-family:'Liberation Sans',sans-serif;-webkit-text-stroke:0.25px #111"><u>F</u>requency smoothing (bands):</span>
<div style="left:356px;top:381px;width:96px;height:20.5px;background:#fff;border:1px solid #7a7a7a;box-sizing:border-box"></div>
<span class="t" style="left:362.40px;top:387.00px;font-size:10.4px;line-height:10.4px;color:#111;font-weight:normal;transform:scaleX(1.0378);transform-origin:left top;font-family:'Liberation Sans',sans-serif;-webkit-text-stroke:0.25px #111">3</span>
<div style="left:467px;top:389.5px;width:117.5px;height:4px;background:#e7eaea;border:1px solid #d6d6d6;box-sizing:border-box"></div>
<svg style="position:absolute;left:495px;top:384px" width="9" height="17" viewBox="0 0 9 17"><path d="M0 0 H9 V12.5 L4.5 16.5 L0 12.5 Z" fill="#0a78d7"/></svg>
<span class="t" style="left:322.00px;top:412.60px;font-size:10.4px;line-height:10.4px;color:#111;font-weight:normal;transform:scaleX(0.9676);transform-origin:left top;font-family:'Liberation Sans',sans-serif;-webkit-text-stroke:0.25px #111">Noise:</span>
<div style="left:358.5px;top:410.5px;width:12px;height:12px;border-radius:50%;border:1px solid #333;background:#fff;box-sizing:border-box"></div>
<div style="left:361.5px;top:413.5px;width:6px;height:6px;border-radius:50%;background:#222"></div>
<span class="t" style="left:373.40px;top:412.60px;font-size:10.4px;line-height:10.4px;color:#111;font-weight:normal;transform:scaleX(0.9378);transform-origin:left top;font-family:'Liberation Sans',sans-serif;-webkit-text-stroke:0.25px #111">Re<u>d</u>uce</span>
<div style="left:420.5px;top:410.5px;width:12px;height:12px;border-radius:50%;border:1px solid #333;background:#fff;box-sizing:border-box"></div>
<span class="t" style="left:435.00px;top:412.60px;font-size:10.4px;line-height:10.4px;color:#111;font-weight:normal;transform:scaleX(0.9338);transform-origin:left top;font-family:'Liberation Sans',sans-serif;-webkit-text-stroke:0.25px #111">Resid<u>u</u>e</span>
<div style="left:204px;top:446px;width:64px;height:18px;background:#e1e1e1;border:1px solid #adadad;box-sizing:border-box"></div>
<span class="t" style="left:218.20px;top:451.20px;font-size:10.4px;line-height:10.4px;color:#111;font-weight:normal;transform:scaleX(0.9630);transform-origin:left top;font-family:'Liberation Sans',sans-serif;-webkit-text-stroke:0.25px #111"><u>P</u>review</span>
<div style="left:426px;top:446px;width:63.5px;height:18px;background:#e1e1e1;border:2px solid #0a78d7;box-sizing:border-box"></div>
<div style="left:429.5px;top:449.5px;width:56.5px;height:11.5px;border:1px dotted #8a8a8a;box-sizing:border-box"></div>
<span class="t" style="left:450.40px;top:451.20px;font-size:10.4px;line-height:10.4px;color:#111;font-weight:normal;transform:scaleX(0.9190);transform-origin:left top;font-family:'Liberation Sans',sans-serif;-webkit-text-stroke:0.25px #111">OK</span>
<div style="left:498px;top:446px;width:63.5px;height:18px;background:#e1e1e1;border:1px solid #adadad;box-sizing:border-box"></div>
<span class="t" style="left:513.80px;top:451.20px;font-size:10.4px;line-height:10.4px;color:#111;font-weight:normal;transform:scaleX(0.9765);transform-origin:left top;font-family:'Liberation Sans',sans-serif;-webkit-text-stroke:0.25px #111">Cancel</span>
<div style="left:570px;top:443.5px;width:23.5px;height:23px;background:#e1e1e1;border:1px solid #adadad;box-sizing:border-box"></div>
<div style="left:572.7px;top:445.8px;width:18.5px;height:18.5px;border-radius:50%;background:#5b9cf0"></div>
<span class="t" style="left:578.10px;top:449.65px;font-size:14px;line-height:14px;color:#fff;font-weight:normal;transform:scaleX(1.0000);transform-origin:center top;font-family:'Liberation Sans',sans-serif;-webkit-text-stroke:0.4px #fff">?</span>
</body></html>
